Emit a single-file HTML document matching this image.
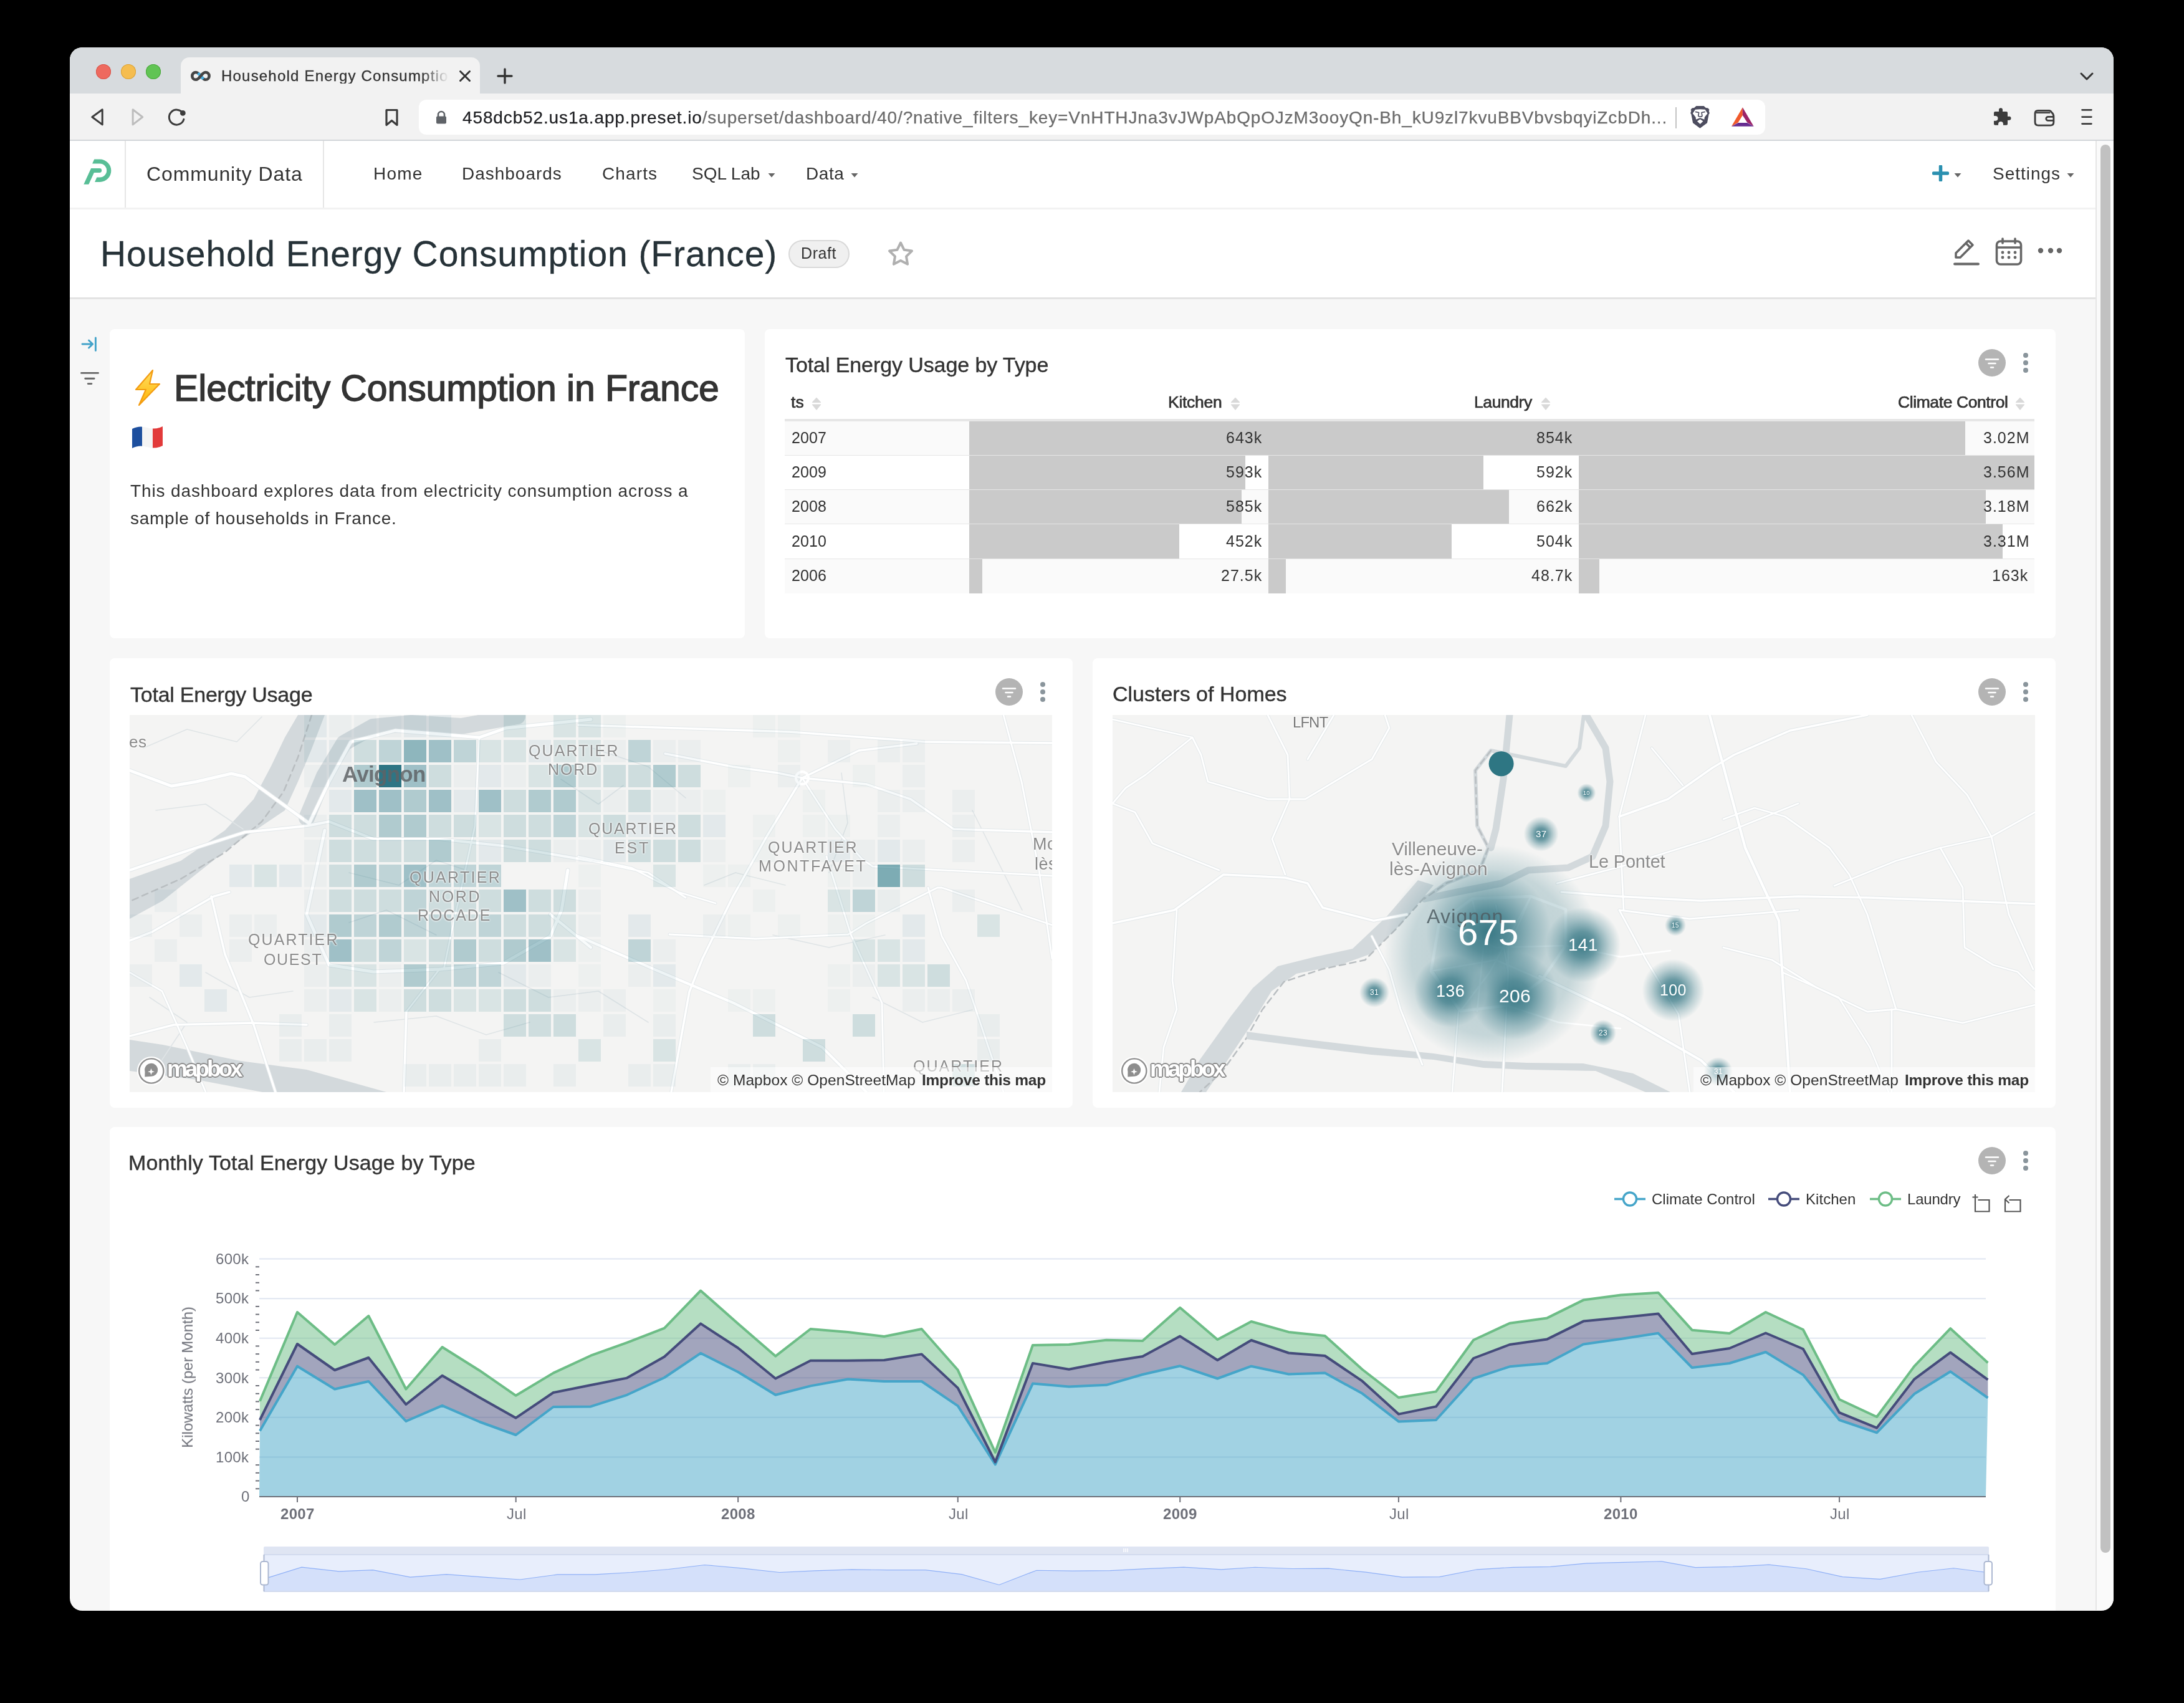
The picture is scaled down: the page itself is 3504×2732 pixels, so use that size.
<!DOCTYPE html>
<html><head><meta charset="utf-8">
<style>
*{box-sizing:border-box;margin:0;padding:0}
html,body{width:3504px;height:2732px;overflow:hidden;background:#000;font-family:"Liberation Sans",sans-serif}
.a{position:absolute;display:block}
.t{position:absolute;white-space:nowrap;will-change:transform}
#win{position:absolute;left:112px;top:76px;width:3279px;height:2508px;border-radius:20px;overflow:hidden;background:#f7f7f7}
</style></head><body><div id="win"><div class="a" style="left:0.00px;top:0.00px;width:3279.00px;height:74.00px;background:#d7dbde"></div><div class="a" style="left:178.00px;top:16.00px;width:480.00px;height:59.00px;background:#f2f2f2;border-radius:14px 14px 0 0"></div><div class="a" style="left:42.00px;top:27.00px;width:24.00px;height:24.00px;background:#ee6a5f;border-radius:50%;box-shadow:inset 0 0 0 1px #d8574c"></div><div class="a" style="left:82.00px;top:27.00px;width:24.00px;height:24.00px;background:#f5bd4f;border-radius:50%;box-shadow:inset 0 0 0 1px #d9a33c"></div><div class="a" style="left:122.00px;top:27.00px;width:24.00px;height:24.00px;background:#61c454;border-radius:50%;box-shadow:inset 0 0 0 1px #4ea840"></div><svg class="a" style="left:192.00px;top:35.00px;" width="36.00" height="22.00" viewBox="0 0 36 22"><path d="M18 10.9 C20.5 7.5 23 5 25.7 5 C29 5 31.6 7.6 31.6 10.9 C31.6 14.2 29 16.8 25.7 16.8 C23 16.8 20.5 14.3 18 10.9 C15.5 7.5 13 5 10.2 5 C6.9 5 4.3 7.6 4.3 10.9 C4.3 14.2 6.9 16.8 10.2 16.8 C13 16.8 15.5 14.3 18 10.9 Z" fill="none" stroke="#454545" stroke-width="4.6"/><path d="M13.6 6.3 L17.2 9.7 M18.8 12.1 L22.4 15.5" stroke="#45ade0" stroke-width="4.6"/><path d="M15.2 14 L20.8 7.8" stroke="#454545" stroke-width="4.4"/></svg><div class="t" style="left:242.70px;top:33.68px;font-size:24px;line-height:24px;font-weight:normal;color:#333;letter-spacing:1.200px;font-family:'Liberation Sans',sans-serif;-webkit-text-stroke:0.35px #333;width:365px;overflow:hidden;-webkit-mask-image:linear-gradient(90deg,#000 88%,transparent 100%)">Household Energy Consumption</div><svg class="a" style="left:624.00px;top:36.00px;" width="20.00" height="20.00" viewBox="0 0 20 20"><path d="M2.5 2.5 L17.5 17.5 M17.5 2.5 L2.5 17.5" stroke="#333" stroke-width="3" stroke-linecap="round"/></svg><svg class="a" style="left:684.00px;top:32.00px;" width="28.00" height="28.00" viewBox="0 0 28 28"><path d="M14 3 V25 M3 14 H25" stroke="#333" stroke-width="3.4" stroke-linecap="round"/></svg><svg class="a" style="left:3224.00px;top:36.00px;" width="24.00" height="22.00" viewBox="0 0 24 22"><path d="M3 6 L12 15 L21 6" fill="none" stroke="#333" stroke-width="3" stroke-linecap="round" stroke-linejoin="round"/></svg><div class="a" style="left:0.00px;top:74.00px;width:3279.00px;height:75.00px;background:#f2f2f2"></div><div class="a" style="left:0.00px;top:148.00px;width:3279.00px;height:2.00px;background:#d2d5d9"></div><svg class="a" style="left:31.00px;top:96.00px;" width="27.00" height="32.00" viewBox="0 0 27 32"><path d="M21.2 3.8 L4.8 15.8 L21.2 27.9 Z" fill="none" stroke="#3c3c3c" stroke-width="3" stroke-linejoin="round"/></svg><svg class="a" style="left:95.00px;top:96.00px;" width="27.00" height="32.00" viewBox="0 0 27 32"><path d="M6.1 3.8 L21.7 15.8 L6.1 27.9 Z" fill="none" stroke="#bdbdbd" stroke-width="3" stroke-linejoin="round"/></svg><svg class="a" style="left:154.00px;top:96.00px;" width="36.00" height="32.00" viewBox="0 0 36 32"><path d="M27.3 9.4 A12 12 0 1 0 28.9 19.4" fill="none" stroke="#3c3c3c" stroke-width="3" stroke-linecap="round"/><circle cx="27.3" cy="9.4" r="4.4" fill="#3c3c3c"/></svg><svg class="a" style="left:502.00px;top:97.00px;" width="29.00" height="31.00" viewBox="0 0 29 31"><path d="M6 3.5 H23 V27.5 L14.5 20.5 L6 27.5 Z" fill="none" stroke="#3c3c3c" stroke-width="3.2" stroke-linejoin="round"/></svg><div class="a" style="left:560.00px;top:84.00px;width:2160.00px;height:56.00px;background:#fff;border-radius:12px"></div><svg class="a" style="left:586.00px;top:100.00px;" width="20.00" height="24.00" viewBox="0 0 20 24"><path d="M5 11 V8 A5 5 0 0 1 15 8 V11" fill="none" stroke="#5f6368" stroke-width="2.6"/><rect x="2" y="10.5" width="16" height="12" rx="2" fill="#5f6368"/></svg><div class="t" style="left:629.50px;top:98.80px;font-size:28px;line-height:28px;font-weight:normal;color:#6b6b6b;letter-spacing:0.870px;font-family:'Liberation Sans',sans-serif;-webkit-text-stroke:0.25px"><span style="color:#202124">458dcb52.us1a.app.preset.io</span>/superset/dashboard/40/?native_filters_key=VnHTHJna3vJWpAbQpOJzM3ooyQn-Bh_kU9zl7kvuBBVbvsbqyiZcbDh...</div><div class="a" style="left:2576.00px;top:96.00px;width:2.00px;height:34.00px;background:#c4c4c4"></div><svg class="a" style="left:2588.00px;top:84.00px;" width="130.00" height="55.00" viewBox="0 0 2184 924"><path d="M360 170 H565 L620 220 L680 225 L715 275 L700 300 L720 365 L700 390 L655 625 L462 770 L270 625 L225 390 L205 365 L225 300 L210 275 L245 225 L305 220 Z" fill="#4d4d5f"/><path d="M265 370 L335 265 Q465 245 600 265 L665 370 L585 470 L575 545 L470 500 L355 545 L345 470 Z" fill="#fff"/><path d="M385 580 L465 525 L545 580 L465 655 Z" fill="#fff"/><path d="M335 325 L430 345 L415 440 Q465 475 520 440 L505 345 L600 325 M355 545 L465 505 L575 545" fill="none" stroke="#4d4d5f" stroke-width="28" stroke-linejoin="round"/><path d="M1610 205 L1310 720 L1490 615 L1610 420 Z" fill="#f15a2b"/><path d="M1610 205 L1910 720 L1735 615 L1610 420 Z" fill="#9b2469"/><path d="M1310 720 L1910 720 L1735 620 L1490 620 Z" fill="#662d91"/></svg><svg class="a" style="left:3073.00px;top:84.00px;" width="185.00" height="55.00" viewBox="0 0 2184 649"><rect x="165" y="225" width="260" height="255" rx="22" fill="#3c3c3c"/><rect x="260" y="185" width="70" height="60" fill="#3c3c3c"/><circle cx="295" cy="190" r="35" fill="#3c3c3c"/><rect x="410" y="317" width="45" height="70" fill="#3c3c3c"/><circle cx="455" cy="352" r="35" fill="#3c3c3c"/><circle cx="195" cy="352" r="46" fill="#f2f2f2"/><rect x="140" y="306" width="55" height="92" fill="#f2f2f2"/><circle cx="295" cy="458" r="46" fill="#f2f2f2"/><rect x="249" y="458" width="92" height="40" fill="#f2f2f2"/><path d="M1000 205 H1210 Q1240 205 1260 240 Q1297 270 1297 320 V425 Q1297 485 1237 485 H1005 Q945 485 945 425 V260 Q945 205 1000 205 Z" fill="none" stroke="#3c3c3c" stroke-width="34"/><path d="M962 245 H1232" stroke="#3c3c3c" stroke-width="28"/><path d="M1290 322 H1190 A36 36 0 0 0 1190 394 H1290" fill="none" stroke="#3c3c3c" stroke-width="32"/><path d="M1836 193 H2012 M1836 325 H2012 M1836 455 H2012" stroke="#3c3c3c" stroke-width="32" stroke-linecap="round"/></svg><div class="a" style="left:0.00px;top:150.00px;width:3279.00px;height:107.00px;background:#fff"></div><div class="a" style="left:0.00px;top:257.00px;width:3250.00px;height:3.00px;background:#f2f2f2"></div><div class="a" style="left:88.00px;top:150.00px;width:2.00px;height:107.00px;background:#e6e6e6"></div><div class="a" style="left:406.00px;top:150.00px;width:2.00px;height:107.00px;background:#e6e6e6"></div><svg class="a" style="left:13.00px;top:169.00px;" width="65.00" height="60.00" viewBox="0 0 65 60"><path d="M26.25 10.6 H35.2 A18.15 18.15 0 0 1 35.2 46.9 H27.1 L30.3 39.5 H35.2 A10.95 10.95 0 0 0 35.2 17.6 H23.1 Z" fill="#58be96"/><path d="M21.1 25 H34.7 A3.45 3.45 0 0 1 34.7 31.9 H25.9 L17.3 50.7 H9.3 Z" fill="#58be96"/></svg><div class="t" style="left:122.70px;top:186.91px;font-size:32px;line-height:32px;font-weight:normal;color:#333;letter-spacing:0.877px;font-family:'Liberation Sans',sans-serif;">Community Data</div><div class="t" style="left:487.30px;top:189.30px;font-size:28px;line-height:28px;font-weight:normal;color:#333;letter-spacing:1.194px;font-family:'Liberation Sans',sans-serif;">Home</div><div class="t" style="left:629.00px;top:189.30px;font-size:28px;line-height:28px;font-weight:normal;color:#333;letter-spacing:0.980px;font-family:'Liberation Sans',sans-serif;">Dashboards</div><div class="t" style="left:853.50px;top:189.30px;font-size:28px;line-height:28px;font-weight:normal;color:#333;letter-spacing:1.126px;font-family:'Liberation Sans',sans-serif;">Charts</div><div class="t" style="left:998.00px;top:189.30px;font-size:28px;line-height:28px;font-weight:normal;color:#333;letter-spacing:0.008px;font-family:'Liberation Sans',sans-serif;">SQL Lab</div><div class="t" style="left:1180.70px;top:189.30px;font-size:28px;line-height:28px;font-weight:normal;color:#333;letter-spacing:0.576px;font-family:'Liberation Sans',sans-serif;">Data</div><svg class="a" style="left:1119.50px;top:201.00px;" width="12.00" height="8.00" viewBox="0 0 12.0 8"><path d="M0.5 1 H11.5 L6 7.5Z" fill="#666"/></svg><svg class="a" style="left:1252.50px;top:201.00px;" width="12.00" height="8.00" viewBox="0 0 12.0 8"><path d="M0.5 1 H11.5 L6 7.5Z" fill="#666"/></svg><svg class="a" style="left:2988.00px;top:189.00px;" width="27.00" height="26.00" viewBox="0 0 27 26"><path d="M13.5 2 V24 M2.5 13 H24.5" stroke="#2a90b0" stroke-width="5.5" stroke-linecap="round"/></svg><svg class="a" style="left:3023.00px;top:201.00px;" width="12.00" height="8.00" viewBox="0 0 12 8"><path d="M0.5 1 H11.5 L6 7.5Z" fill="#666"/></svg><div class="t" style="left:3085.00px;top:189.30px;font-size:28px;line-height:28px;font-weight:normal;color:#333;letter-spacing:0.975px;font-family:'Liberation Sans',sans-serif;">Settings</div><svg class="a" style="left:3204.00px;top:201.00px;" width="12.00" height="8.00" viewBox="0 0 12 8"><path d="M0.5 1 H11.5 L6 7.5Z" fill="#666"/></svg><div class="a" style="left:0.00px;top:260.00px;width:3250.00px;height:142.00px;background:#fff"></div><div class="a" style="left:0.00px;top:401.00px;width:3250.00px;height:3.00px;background:#e3e3e3"></div><div class="t" style="left:48.70px;top:303.25px;font-size:57px;line-height:57px;font-weight:normal;color:#263238;letter-spacing:0.928px;font-family:'Liberation Sans',sans-serif;-webkit-text-stroke:0.3px #263238">Household Energy Consumption (France)</div><div class="a" style="left:1153.00px;top:309.00px;width:98.00px;height:45.00px;background:#f0f0f0;border:2px solid #d9d9d9;border-radius:23px"></div><div class="t" style="left:1173.40px;top:318.24px;font-size:25px;line-height:25px;font-weight:normal;color:#333;letter-spacing:0.593px;font-family:'Liberation Sans',sans-serif;">Draft</div><svg class="a" style="left:1310.00px;top:309.00px;" width="46.00" height="42.00" viewBox="0 0 46 42"><path d="M23 4.5 L28.6 15.8 L41 17.6 L32 26.4 L34.1 38.8 L23 33 L11.9 38.8 L14 26.4 L5 17.6 L17.4 15.8 Z" fill="none" stroke="#b0b0b0" stroke-width="4" stroke-linejoin="round"/></svg><svg class="a" style="left:3018.00px;top:304.00px;" width="48.00" height="48.00" viewBox="0 0 48 48"><path d="M8 33 V26 L28 6 L35 13 L15 33 Z" fill="none" stroke="#666" stroke-width="3.5" stroke-linejoin="round"/><path d="M24 10 L31 17" stroke="#666" stroke-width="3.5"/><path d="M6 43.5 H44" stroke="#666" stroke-width="3.8" stroke-linecap="round"/></svg><svg class="a" style="left:3088.00px;top:304.00px;" width="46.00" height="48.00" viewBox="0 0 46 48"><rect x="3.5" y="7" width="39" height="37" rx="6" fill="none" stroke="#666" stroke-width="3.6"/><path d="M3.5 17 H42.5" stroke="#666" stroke-width="3.6"/><path d="M13 3 V10 M33 3 V10" stroke="#666" stroke-width="3.6" stroke-linecap="round"/><circle cx="13" cy="25" r="2.4" fill="#666"/><circle cx="13" cy="33" r="2.4" fill="#666"/><circle cx="23" cy="25" r="2.4" fill="#666"/><circle cx="23" cy="33" r="2.4" fill="#666"/><circle cx="33" cy="25" r="2.4" fill="#666"/><circle cx="33" cy="33" r="2.4" fill="#666"/></svg><svg class="a" style="left:3154.00px;top:318.00px;" width="48.00" height="16.00" viewBox="0 0 48 16"><circle cx="8" cy="8" r="4.2" fill="#666"/><circle cx="24" cy="8" r="4.2" fill="#666"/><circle cx="38" cy="8" r="4.2" fill="#666"/></svg><div class="a" style="left:3250.00px;top:150.00px;width:29.00px;height:2357.00px;background:#fafafa;border-left:2px solid #e6e6e6"></div><div class="a" style="left:3258.00px;top:156.00px;width:16.00px;height:2259.00px;background:#c1c1c1;border-radius:8px"></div><svg class="a" style="left:16.00px;top:462.00px;" width="32.00" height="28.00" viewBox="0 0 32 28"><path d="M4 14 H20.5 M14.5 8 L20.7 14 L14.5 20 M25.4 4 V24.4" fill="none" stroke="#44a3c9" stroke-width="2.9" stroke-linecap="round" stroke-linejoin="round"/></svg><svg class="a" style="left:14.00px;top:518.00px;" width="36.00" height="26.00" viewBox="0 0 36 26"><path d="M4.5 4.4 H31.5 M10.7 13.2 H25.1 M15.2 21.6 H20.9" stroke="#666" stroke-width="2.9" stroke-linecap="round"/></svg><div class="a" style="left:64.00px;top:452.00px;width:1019.00px;height:496.00px;background:#fff;border-radius:8px"></div><div class="a" style="left:1115.00px;top:452.00px;width:2071.00px;height:496.00px;background:#fff;border-radius:8px"></div><div class="a" style="left:64.00px;top:980.00px;width:1545.00px;height:721.00px;background:#fff;border-radius:8px"></div><div class="a" style="left:1641.00px;top:980.00px;width:1545.00px;height:721.00px;background:#fff;border-radius:8px"></div><div class="a" style="left:64.00px;top:1732.00px;width:3122.00px;height:792.00px;background:#fff;border-radius:8px"></div><svg class="a" style="left:102.00px;top:516.00px;" width="46.00" height="60.00" viewBox="0 0 46 60"><defs><linearGradient id="lg" x1="0" y1="0" x2="0" y2="1"><stop offset="0" stop-color="#ffe066"/><stop offset="1" stop-color="#ffb300"/></linearGradient></defs><path d="M31 2 L4 33 H20 L9 58 L42 24 H26 Z" fill="url(#lg)" stroke="#f39c12" stroke-width="2.2" stroke-linejoin="round"/></svg><div class="t" style="left:166.90px;top:518.16px;font-size:59px;line-height:59px;font-weight:normal;color:#333;letter-spacing:-0.121px;font-family:'Liberation Sans',sans-serif;-webkit-text-stroke:1.4px #333">Electricity Consumption in France</div><svg class="a" style="left:97.00px;top:604.00px;" width="55.00" height="42.00" viewBox="0 0 55 42"><defs><clipPath id="fc"><path d="M3 8 Q14 2 27 6 Q40 10 52 4 V35 Q40 41 27 37 Q14 33 3 39 Z"/></clipPath></defs><g clip-path="url(#fc)"><rect x="0" y="0" width="19" height="42" fill="#1d4f9e"/><rect x="19" y="0" width="17" height="42" fill="#f4f4f4"/><rect x="36" y="0" width="19" height="42" fill="#e23a3a"/></g></svg><div class="t" style="left:97.00px;top:698.30px;font-size:28px;line-height:28px;font-weight:normal;color:#333;letter-spacing:0.881px;font-family:'Liberation Sans',sans-serif;">This dashboard explores data from electricity consumption across a</div><div class="t" style="left:97.00px;top:741.90px;font-size:28px;line-height:28px;font-weight:normal;color:#333;letter-spacing:0.737px;font-family:'Liberation Sans',sans-serif;">sample of households in France.</div><div class="t" style="left:1148.00px;top:492.22px;font-size:34px;line-height:34px;font-weight:normal;color:#333;letter-spacing:-0.093px;font-family:'Liberation Sans',sans-serif;-webkit-text-stroke:0.4px #333">Total Energy Usage by Type</div><div class="a" style="left:3062.00px;top:483.50px;width:44.00px;height:44.00px;background:#b4b4b4;border-radius:50%"></div><svg class="a" style="left:3070.00px;top:495.50px;" width="28.00" height="22.00" viewBox="0 0 28 22.0"><path d="M4 4.5 H24 M8.5 11 H19.5 M12 17.5 H16" stroke="#fff" stroke-width="2.6" stroke-linecap="round"/></svg><svg class="a" style="left:3132.50px;top:485.50px;" width="10.00" height="40.00" viewBox="0 0 10.0 40.0"><circle cx="5" cy="8" r="4" fill="#8a959c"/><circle cx="5" cy="20" r="4" fill="#8a959c"/><circle cx="5" cy="32" r="4" fill="#8a959c"/></svg><div class="t" style="left:1157.00px;top:556.07px;font-size:26.5px;line-height:26.5px;font-weight:normal;color:#333;letter-spacing:0.137px;font-family:'Liberation Sans',sans-serif;-webkit-text-stroke:0.7px #333">ts</div><svg class="a" style="left:1190.00px;top:560.00px;" width="16.00" height="24.00" viewBox="0 0 16 24"><path d="M8 2.5 L14.5 9.5 H1.5Z M8 21 L14.5 13 H1.5Z" fill="#d9d9d9" stroke="#d9d9d9" stroke-width="1.2" stroke-linejoin="round"/></svg><div class="t" style="left:1762.00px;top:556.07px;font-size:26.5px;line-height:26.5px;font-weight:normal;color:#333;letter-spacing:-0.275px;font-family:'Liberation Sans',sans-serif;-webkit-text-stroke:0.7px #333">Kitchen</div><svg class="a" style="left:1862.00px;top:560.00px;" width="16.00" height="24.00" viewBox="0 0 16 24"><path d="M8 2.5 L14.5 9.5 H1.5Z M8 21 L14.5 13 H1.5Z" fill="#d9d9d9" stroke="#d9d9d9" stroke-width="1.2" stroke-linejoin="round"/></svg><div class="t" style="left:2253.00px;top:556.07px;font-size:26.5px;line-height:26.5px;font-weight:normal;color:#333;letter-spacing:-0.419px;font-family:'Liberation Sans',sans-serif;-webkit-text-stroke:0.7px #333">Laundry</div><svg class="a" style="left:2360.00px;top:560.00px;" width="16.00" height="24.00" viewBox="0 0 16 24"><path d="M8 2.5 L14.5 9.5 H1.5Z M8 21 L14.5 13 H1.5Z" fill="#d9d9d9" stroke="#d9d9d9" stroke-width="1.2" stroke-linejoin="round"/></svg><div class="t" style="left:2933.00px;top:556.07px;font-size:26.5px;line-height:26.5px;font-weight:normal;color:#333;letter-spacing:-0.409px;font-family:'Liberation Sans',sans-serif;-webkit-text-stroke:0.7px #333">Climate Control</div><svg class="a" style="left:3121.00px;top:560.00px;" width="16.00" height="24.00" viewBox="0 0 16 24"><path d="M8 2.5 L14.5 9.5 H1.5Z M8 21 L14.5 13 H1.5Z" fill="#d9d9d9" stroke="#d9d9d9" stroke-width="1.2" stroke-linejoin="round"/></svg><div class="a" style="left:1147.00px;top:596.00px;width:2005.00px;height:4.00px;background:#e6e6e6"></div><div class="a" style="left:1147.00px;top:600.00px;width:2005.00px;height:54.50px;background:#fafafa"></div><div class="a" style="left:1443.00px;top:600.00px;width:480.00px;height:54.50px;background:#cacaca"></div><div class="a" style="left:1923.00px;top:600.00px;width:498.00px;height:54.50px;background:#cacaca"></div><div class="a" style="left:2421.00px;top:600.00px;width:620.12px;height:54.50px;background:#cacaca"></div><div class="a" style="left:1147.00px;top:653.50px;width:2005.00px;height:2.00px;background:#e6e6e6"></div><div class="t" style="left:1157.90px;top:613.84px;font-size:25px;line-height:25px;font-weight:normal;color:#333;letter-spacing:0.100px;font-family:'Liberation Sans',sans-serif;">2007</div><div class="t" style="left:1855.29px;top:613.84px;font-size:25px;line-height:25px;font-weight:normal;color:#333;letter-spacing:1.000px;font-family:'Liberation Sans',sans-serif;">643k</div><div class="t" style="left:2353.29px;top:613.84px;font-size:25px;line-height:25px;font-weight:normal;color:#333;letter-spacing:1.000px;font-family:'Liberation Sans',sans-serif;">854k</div><div class="t" style="left:3070.34px;top:613.84px;font-size:25px;line-height:25px;font-weight:normal;color:#333;letter-spacing:1.000px;font-family:'Liberation Sans',sans-serif;">3.02M</div><div class="a" style="left:1147.00px;top:654.50px;width:2005.00px;height:55.50px;background:#fff"></div><div class="a" style="left:1443.00px;top:654.50px;width:442.67px;height:55.50px;background:#cacaca"></div><div class="a" style="left:1923.00px;top:654.50px;width:345.22px;height:55.50px;background:#cacaca"></div><div class="a" style="left:2421.00px;top:654.50px;width:731.00px;height:55.50px;background:#cacaca"></div><div class="a" style="left:1147.00px;top:709.00px;width:2005.00px;height:2.00px;background:#e6e6e6"></div><div class="t" style="left:1157.90px;top:669.14px;font-size:25px;line-height:25px;font-weight:normal;color:#333;letter-spacing:0.100px;font-family:'Liberation Sans',sans-serif;">2009</div><div class="t" style="left:1855.29px;top:669.14px;font-size:25px;line-height:25px;font-weight:normal;color:#333;letter-spacing:1.000px;font-family:'Liberation Sans',sans-serif;">593k</div><div class="t" style="left:2353.29px;top:669.14px;font-size:25px;line-height:25px;font-weight:normal;color:#333;letter-spacing:1.000px;font-family:'Liberation Sans',sans-serif;">592k</div><div class="t" style="left:3070.34px;top:669.14px;font-size:25px;line-height:25px;font-weight:normal;color:#333;letter-spacing:1.000px;font-family:'Liberation Sans',sans-serif;">3.56M</div><div class="a" style="left:1147.00px;top:710.00px;width:2005.00px;height:55.00px;background:#fafafa"></div><div class="a" style="left:1443.00px;top:710.00px;width:436.70px;height:55.00px;background:#cacaca"></div><div class="a" style="left:1923.00px;top:710.00px;width:386.04px;height:55.00px;background:#cacaca"></div><div class="a" style="left:2421.00px;top:710.00px;width:652.97px;height:55.00px;background:#cacaca"></div><div class="a" style="left:1147.00px;top:764.00px;width:2005.00px;height:2.00px;background:#e6e6e6"></div><div class="t" style="left:1157.90px;top:724.44px;font-size:25px;line-height:25px;font-weight:normal;color:#333;letter-spacing:0.100px;font-family:'Liberation Sans',sans-serif;">2008</div><div class="t" style="left:1855.29px;top:724.44px;font-size:25px;line-height:25px;font-weight:normal;color:#333;letter-spacing:1.000px;font-family:'Liberation Sans',sans-serif;">585k</div><div class="t" style="left:2353.29px;top:724.44px;font-size:25px;line-height:25px;font-weight:normal;color:#333;letter-spacing:1.000px;font-family:'Liberation Sans',sans-serif;">662k</div><div class="t" style="left:3070.34px;top:724.44px;font-size:25px;line-height:25px;font-weight:normal;color:#333;letter-spacing:1.000px;font-family:'Liberation Sans',sans-serif;">3.18M</div><div class="a" style="left:1147.00px;top:765.00px;width:2005.00px;height:56.00px;background:#fff"></div><div class="a" style="left:1443.00px;top:765.00px;width:337.42px;height:56.00px;background:#cacaca"></div><div class="a" style="left:1923.00px;top:765.00px;width:293.90px;height:56.00px;background:#cacaca"></div><div class="a" style="left:2421.00px;top:765.00px;width:679.67px;height:56.00px;background:#cacaca"></div><div class="a" style="left:1147.00px;top:820.00px;width:2005.00px;height:2.00px;background:#e6e6e6"></div><div class="t" style="left:1157.90px;top:779.74px;font-size:25px;line-height:25px;font-weight:normal;color:#333;letter-spacing:0.100px;font-family:'Liberation Sans',sans-serif;">2010</div><div class="t" style="left:1855.29px;top:779.74px;font-size:25px;line-height:25px;font-weight:normal;color:#333;letter-spacing:1.000px;font-family:'Liberation Sans',sans-serif;">452k</div><div class="t" style="left:2353.29px;top:779.74px;font-size:25px;line-height:25px;font-weight:normal;color:#333;letter-spacing:1.000px;font-family:'Liberation Sans',sans-serif;">504k</div><div class="t" style="left:3070.34px;top:779.74px;font-size:25px;line-height:25px;font-weight:normal;color:#333;letter-spacing:1.000px;font-family:'Liberation Sans',sans-serif;">3.31M</div><div class="a" style="left:1147.00px;top:821.00px;width:2005.00px;height:55.00px;background:#fafafa"></div><div class="a" style="left:1443.00px;top:821.00px;width:20.53px;height:55.00px;background:#cacaca"></div><div class="a" style="left:1923.00px;top:821.00px;width:28.40px;height:55.00px;background:#cacaca"></div><div class="a" style="left:2421.00px;top:821.00px;width:33.47px;height:55.00px;background:#cacaca"></div><div class="t" style="left:1157.90px;top:835.04px;font-size:25px;line-height:25px;font-weight:normal;color:#333;letter-spacing:0.100px;font-family:'Liberation Sans',sans-serif;">2006</div><div class="t" style="left:1847.34px;top:835.04px;font-size:25px;line-height:25px;font-weight:normal;color:#333;letter-spacing:1.000px;font-family:'Liberation Sans',sans-serif;">27.5k</div><div class="t" style="left:2345.34px;top:835.04px;font-size:25px;line-height:25px;font-weight:normal;color:#333;letter-spacing:1.000px;font-family:'Liberation Sans',sans-serif;">48.7k</div><div class="t" style="left:3084.29px;top:835.04px;font-size:25px;line-height:25px;font-weight:normal;color:#333;letter-spacing:1.000px;font-family:'Liberation Sans',sans-serif;">163k</div><div class="t" style="left:97.00px;top:1020.92px;font-size:34px;line-height:34px;font-weight:normal;color:#333;letter-spacing:-0.242px;font-family:'Liberation Sans',sans-serif;-webkit-text-stroke:0.4px #333">Total Energy Usage</div><div class="a" style="left:1485.00px;top:1012.00px;width:44.00px;height:44.00px;background:#b4b4b4;border-radius:50%"></div><svg class="a" style="left:1493.00px;top:1024.00px;" width="28.00" height="22.00" viewBox="0 0 28 22"><path d="M4 4.5 H24 M8.5 11 H19.5 M12 17.5 H16" stroke="#fff" stroke-width="2.6" stroke-linecap="round"/></svg><svg class="a" style="left:1556.00px;top:1014.00px;" width="10.00" height="40.00" viewBox="0 0 10 40"><circle cx="5" cy="8" r="4" fill="#8a959c"/><circle cx="5" cy="20" r="4" fill="#8a959c"/><circle cx="5" cy="32" r="4" fill="#8a959c"/></svg><div class="t" style="left:1673.00px;top:1019.72px;font-size:34px;line-height:34px;font-weight:normal;color:#333;letter-spacing:-0.002px;font-family:'Liberation Sans',sans-serif;-webkit-text-stroke:0.4px #333">Clusters of Homes</div><div class="a" style="left:3062.00px;top:1012.00px;width:44.00px;height:44.00px;background:#b4b4b4;border-radius:50%"></div><svg class="a" style="left:3070.00px;top:1024.00px;" width="28.00" height="22.00" viewBox="0 0 28 22"><path d="M4 4.5 H24 M8.5 11 H19.5 M12 17.5 H16" stroke="#fff" stroke-width="2.6" stroke-linecap="round"/></svg><svg class="a" style="left:3133.00px;top:1014.00px;" width="10.00" height="40.00" viewBox="0 0 10 40"><circle cx="5" cy="8" r="4" fill="#8a959c"/><circle cx="5" cy="20" r="4" fill="#8a959c"/><circle cx="5" cy="32" r="4" fill="#8a959c"/></svg><svg class="a" style="left:96px;top:1071px;" width="1480" height="605" viewBox="208 1147 1480 605"><defs><clipPath id="m1"><rect x="208" y="1147" width="1480" height="605"/></clipPath></defs><g clip-path="url(#m1)"><rect x="208" y="1147" width="1480" height="605" fill="#f4f4f3"/><polygon points="478,1147 457,1183 435,1229 407,1282 361,1332 290,1381 208,1410 208,1474 261,1445 368,1360 457,1300 478,1254 499,1204 521,1147" fill="#d3d9dc"/><polyline points="492,1312 520,1245 552,1192 598,1166 660,1160 740,1165 830,1149" fill="none" stroke="#d3d9dc" stroke-width="26" stroke-linejoin="round" stroke-linecap="round" /><polyline points="500,1147 478,1215 455,1270 420,1318 360,1368 290,1410 208,1446" fill="none" stroke="#b9bec1" stroke-width="2.5" stroke-linejoin="round" stroke-linecap="round" stroke-dasharray="10 7"/><polygon points="208,1668 261,1676 386,1702 492,1716 620,1752 421,1752 315,1732 208,1718" fill="#d3d9dc"/><polyline points="230,1200 300,1170 380,1190 420,1150" fill="none" stroke="#dfe4e6" stroke-width="1.6" stroke-linejoin="round" stroke-linecap="round" /><polyline points="250,1300 330,1290 390,1330" fill="none" stroke="#dfe4e6" stroke-width="1.6" stroke-linejoin="round" stroke-linecap="round" /><polyline points="560,1400 640,1420 700,1380 760,1400" fill="none" stroke="#dfe4e6" stroke-width="1.6" stroke-linejoin="round" stroke-linecap="round" /><polyline points="560,1480 620,1460 700,1500" fill="none" stroke="#dfe4e6" stroke-width="1.6" stroke-linejoin="round" stroke-linecap="round" /><polyline points="330,1560 400,1600 470,1590" fill="none" stroke="#dfe4e6" stroke-width="1.6" stroke-linejoin="round" stroke-linecap="round" /><polyline points="600,1640 700,1630 780,1660 850,1640" fill="none" stroke="#dfe4e6" stroke-width="1.6" stroke-linejoin="round" stroke-linecap="round" /><polyline points="950,1200 1040,1230 1100,1280" fill="none" stroke="#dfe4e6" stroke-width="1.6" stroke-linejoin="round" stroke-linecap="round" /><polyline points="1130,1420 1180,1400 1260,1420" fill="none" stroke="#dfe4e6" stroke-width="1.6" stroke-linejoin="round" stroke-linecap="round" /><polyline points="1240,1500 1330,1520 1420,1500" fill="none" stroke="#dfe4e6" stroke-width="1.6" stroke-linejoin="round" stroke-linecap="round" /><polyline points="1350,1240 1360,1320 1330,1400" fill="none" stroke="#dfe4e6" stroke-width="1.6" stroke-linejoin="round" stroke-linecap="round" /><polyline points="1560,1300 1600,1380 1640,1460" fill="none" stroke="#dfe4e6" stroke-width="1.6" stroke-linejoin="round" stroke-linecap="round" /><polyline points="1400,1600 1480,1640 1560,1620" fill="none" stroke="#dfe4e6" stroke-width="1.6" stroke-linejoin="round" stroke-linecap="round" /><polyline points="800,1560 880,1600 960,1590 1040,1640" fill="none" stroke="#dfe4e6" stroke-width="1.6" stroke-linejoin="round" stroke-linecap="round" /><polyline points="240,1600 300,1640 260,1700" fill="none" stroke="#dfe4e6" stroke-width="1.6" stroke-linejoin="round" stroke-linecap="round" /><polyline points="900,1250 960,1290 1000,1260" fill="none" stroke="#dfe4e6" stroke-width="1.6" stroke-linejoin="round" stroke-linecap="round" /><polyline points="208,1236 275,1261 315,1254 371,1241 393,1246 496,1321" fill="none" stroke="#e3e8ea" stroke-width="6.8999999999999995" stroke-linejoin="round" stroke-linecap="round" /><polyline points="208,1396 315,1360 393,1335 492,1325 528,1318 599,1346 705,1346 808,1357 948,1381" fill="none" stroke="#e3e8ea" stroke-width="6.199999999999999" stroke-linejoin="round" stroke-linecap="round" /><polyline points="208,1509 244,1495 343,1438 368,1431" fill="none" stroke="#e3e8ea" stroke-width="5.5" stroke-linejoin="round" stroke-linecap="round" /><polyline points="496,1321 528,1254 563,1190 634,1172 769,1183 812,1168 948,1154" fill="none" stroke="#e3e8ea" stroke-width="6.8999999999999995" stroke-linejoin="round" stroke-linecap="round" /><polyline points="521,1332 492,1467 528,1548 599,1559 705,1555 808,1545 883,1502 901,1460 911,1396" fill="none" stroke="#e3e8ea" stroke-width="6.8999999999999995" stroke-linejoin="round" stroke-linecap="round" /><polyline points="339,1438 361,1531 407,1644 442,1752" fill="none" stroke="#e3e8ea" stroke-width="5.5" stroke-linejoin="round" stroke-linecap="round" /><polyline points="208,1662 279,1644 403,1641 492,1644" fill="none" stroke="#e3e8ea" stroke-width="5.5" stroke-linejoin="round" stroke-linecap="round" /><polyline points="652,1623 648,1752" fill="none" stroke="#e3e8ea" stroke-width="5.5" stroke-linejoin="round" stroke-linecap="round" /><polyline points="705,1555 652,1623" fill="none" stroke="#e3e8ea" stroke-width="4.8" stroke-linejoin="round" stroke-linecap="round" /><polyline points="769,1183 762,1325 723,1502 712,1555" fill="none" stroke="#e3e8ea" stroke-width="4.8" stroke-linejoin="round" stroke-linecap="round" /><polyline points="883,1467 948,1520" fill="none" stroke="#e3e8ea" stroke-width="6.199999999999999" stroke-linejoin="round" stroke-linecap="round" /><polyline points="928,1163 1266,1174 1483,1190 1688,1192" fill="none" stroke="#e3e8ea" stroke-width="5.5" stroke-linejoin="round" stroke-linecap="round" /><polyline points="1067,1209 1176,1230 1248,1240 1287,1248" fill="none" stroke="#e3e8ea" stroke-width="5.5" stroke-linejoin="round" stroke-linecap="round" /><polyline points="1287,1248 1378,1204 1471,1193" fill="none" stroke="#e3e8ea" stroke-width="5.5" stroke-linejoin="round" stroke-linecap="round" /><polyline points="1287,1248 1390,1258 1461,1282 1530,1330 1688,1335" fill="none" stroke="#e3e8ea" stroke-width="5.5" stroke-linejoin="round" stroke-linecap="round" /><polyline points="1287,1248 1230,1342 1176,1438 1127,1538 1106,1591 1077,1752" fill="none" stroke="#e3e8ea" stroke-width="5.5" stroke-linejoin="round" stroke-linecap="round" /><polyline points="1287,1248 1340,1330 1383,1378 1400,1390 1688,1405" fill="none" stroke="#e3e8ea" stroke-width="4.8" stroke-linejoin="round" stroke-linecap="round" /><polyline points="928,1374 1013,1392 1088,1431 1148,1449" fill="none" stroke="#e3e8ea" stroke-width="4.8" stroke-linejoin="round" stroke-linecap="round" /><polyline points="928,1502 1052,1556 1177,1609 1319,1680 1372,1733 1390,1752" fill="none" stroke="#e3e8ea" stroke-width="6.199999999999999" stroke-linejoin="round" stroke-linecap="round" /><polyline points="1074,1499 1212,1506 1361,1499 1390,1481 1504,1424 1511,1424 1688,1484" fill="none" stroke="#e3e8ea" stroke-width="4.8" stroke-linejoin="round" stroke-linecap="round" /><polyline points="1326,1374 1365,1499 1415,1609 1418,1752" fill="none" stroke="#e3e8ea" stroke-width="4.8" stroke-linejoin="round" stroke-linecap="round" /><polyline points="1489,1424 1511,1502 1550,1573 1610,1752" fill="none" stroke="#e3e8ea" stroke-width="4.8" stroke-linejoin="round" stroke-linecap="round" /><polyline points="1610,1147 1639,1254 1667,1396 1688,1538" fill="none" stroke="#e3e8ea" stroke-width="4.8" stroke-linejoin="round" stroke-linecap="round" /><polyline points="948,1381 1040,1400 1100,1440" fill="none" stroke="#e3e8ea" stroke-width="4.8" stroke-linejoin="round" stroke-linecap="round" /><polyline points="208,1560 260,1590 300,1680 330,1752" fill="none" stroke="#e3e8ea" stroke-width="4.8" stroke-linejoin="round" stroke-linecap="round" /><polyline points="208,1236 275,1261 315,1254 371,1241 393,1246 496,1321" fill="none" stroke="#fff" stroke-width="4.8999999999999995" stroke-linejoin="round" stroke-linecap="round" /><polyline points="208,1396 315,1360 393,1335 492,1325 528,1318 599,1346 705,1346 808,1357 948,1381" fill="none" stroke="#fff" stroke-width="4.199999999999999" stroke-linejoin="round" stroke-linecap="round" /><polyline points="208,1509 244,1495 343,1438 368,1431" fill="none" stroke="#fff" stroke-width="3.5" stroke-linejoin="round" stroke-linecap="round" /><polyline points="496,1321 528,1254 563,1190 634,1172 769,1183 812,1168 948,1154" fill="none" stroke="#fff" stroke-width="4.8999999999999995" stroke-linejoin="round" stroke-linecap="round" /><polyline points="521,1332 492,1467 528,1548 599,1559 705,1555 808,1545 883,1502 901,1460 911,1396" fill="none" stroke="#fff" stroke-width="4.8999999999999995" stroke-linejoin="round" stroke-linecap="round" /><polyline points="339,1438 361,1531 407,1644 442,1752" fill="none" stroke="#fff" stroke-width="3.5" stroke-linejoin="round" stroke-linecap="round" /><polyline points="208,1662 279,1644 403,1641 492,1644" fill="none" stroke="#fff" stroke-width="3.5" stroke-linejoin="round" stroke-linecap="round" /><polyline points="652,1623 648,1752" fill="none" stroke="#fff" stroke-width="3.5" stroke-linejoin="round" stroke-linecap="round" /><polyline points="705,1555 652,1623" fill="none" stroke="#fff" stroke-width="2.8" stroke-linejoin="round" stroke-linecap="round" /><polyline points="769,1183 762,1325 723,1502 712,1555" fill="none" stroke="#fff" stroke-width="2.8" stroke-linejoin="round" stroke-linecap="round" /><polyline points="883,1467 948,1520" fill="none" stroke="#fff" stroke-width="4.199999999999999" stroke-linejoin="round" stroke-linecap="round" /><polyline points="928,1163 1266,1174 1483,1190 1688,1192" fill="none" stroke="#fff" stroke-width="3.5" stroke-linejoin="round" stroke-linecap="round" /><polyline points="1067,1209 1176,1230 1248,1240 1287,1248" fill="none" stroke="#fff" stroke-width="3.5" stroke-linejoin="round" stroke-linecap="round" /><polyline points="1287,1248 1378,1204 1471,1193" fill="none" stroke="#fff" stroke-width="3.5" stroke-linejoin="round" stroke-linecap="round" /><polyline points="1287,1248 1390,1258 1461,1282 1530,1330 1688,1335" fill="none" stroke="#fff" stroke-width="3.5" stroke-linejoin="round" stroke-linecap="round" /><polyline points="1287,1248 1230,1342 1176,1438 1127,1538 1106,1591 1077,1752" fill="none" stroke="#fff" stroke-width="3.5" stroke-linejoin="round" stroke-linecap="round" /><polyline points="1287,1248 1340,1330 1383,1378 1400,1390 1688,1405" fill="none" stroke="#fff" stroke-width="2.8" stroke-linejoin="round" stroke-linecap="round" /><polyline points="928,1374 1013,1392 1088,1431 1148,1449" fill="none" stroke="#fff" stroke-width="2.8" stroke-linejoin="round" stroke-linecap="round" /><polyline points="928,1502 1052,1556 1177,1609 1319,1680 1372,1733 1390,1752" fill="none" stroke="#fff" stroke-width="4.199999999999999" stroke-linejoin="round" stroke-linecap="round" /><polyline points="1074,1499 1212,1506 1361,1499 1390,1481 1504,1424 1511,1424 1688,1484" fill="none" stroke="#fff" stroke-width="2.8" stroke-linejoin="round" stroke-linecap="round" /><polyline points="1326,1374 1365,1499 1415,1609 1418,1752" fill="none" stroke="#fff" stroke-width="2.8" stroke-linejoin="round" stroke-linecap="round" /><polyline points="1489,1424 1511,1502 1550,1573 1610,1752" fill="none" stroke="#fff" stroke-width="2.8" stroke-linejoin="round" stroke-linecap="round" /><polyline points="1610,1147 1639,1254 1667,1396 1688,1538" fill="none" stroke="#fff" stroke-width="2.8" stroke-linejoin="round" stroke-linecap="round" /><polyline points="948,1381 1040,1400 1100,1440" fill="none" stroke="#fff" stroke-width="2.8" stroke-linejoin="round" stroke-linecap="round" /><polyline points="208,1560 260,1590 300,1680 330,1752" fill="none" stroke="#fff" stroke-width="2.8" stroke-linejoin="round" stroke-linecap="round" /><circle cx="1287" cy="1248" r="10" fill="none" stroke="#fff" stroke-width="4"/><rect x="488" y="1147" width="36" height="36" fill="rgba(40,120,135,0.08)"/><rect x="528" y="1147" width="36" height="36" fill="rgba(40,120,135,0.045)"/><rect x="568" y="1147" width="36" height="36" fill="rgba(40,120,135,0.045)"/><rect x="608" y="1147" width="36" height="36" fill="rgba(40,120,135,0.045)"/><rect x="648" y="1147" width="36" height="36" fill="rgba(40,120,135,0.08)"/><rect x="688" y="1147" width="36" height="36" fill="rgba(40,120,135,0.08)"/><rect x="808" y="1147" width="36" height="36" fill="rgba(40,120,135,0.13)"/><rect x="888" y="1147" width="36" height="36" fill="rgba(40,120,135,0.13)"/><rect x="928" y="1147" width="36" height="36" fill="rgba(40,120,135,0.13)"/><rect x="968" y="1147" width="36" height="36" fill="rgba(40,120,135,0.03)"/><rect x="1208" y="1147" width="36" height="36" fill="rgba(40,120,135,0.03)"/><rect x="1248" y="1147" width="36" height="36" fill="rgba(40,120,135,0.03)"/><rect x="488" y="1187" width="36" height="36" fill="rgba(40,120,135,0.08)"/><rect x="528" y="1187" width="36" height="36" fill="rgba(40,120,135,0.08)"/><rect x="568" y="1187" width="36" height="36" fill="rgba(40,120,135,0.19)"/><rect x="608" y="1187" width="36" height="36" fill="rgba(40,120,135,0.26)"/><rect x="648" y="1187" width="36" height="36" fill="rgba(40,120,135,0.5)"/><rect x="688" y="1187" width="36" height="36" fill="rgba(40,120,135,0.41)"/><rect x="728" y="1187" width="36" height="36" fill="rgba(40,120,135,0.26)"/><rect x="768" y="1187" width="36" height="36" fill="rgba(40,120,135,0.13)"/><rect x="808" y="1187" width="36" height="36" fill="rgba(40,120,135,0.13)"/><rect x="848" y="1187" width="36" height="36" fill="rgba(40,120,135,0.08)"/><rect x="888" y="1187" width="36" height="36" fill="rgba(40,120,135,0.13)"/><rect x="928" y="1187" width="36" height="36" fill="rgba(40,120,135,0.13)"/><rect x="968" y="1187" width="36" height="36" fill="rgba(40,120,135,0.045)"/><rect x="1008" y="1187" width="36" height="36" fill="rgba(40,120,135,0.26)"/><rect x="1048" y="1187" width="36" height="36" fill="rgba(40,120,135,0.045)"/><rect x="1088" y="1187" width="36" height="36" fill="rgba(40,120,135,0.045)"/><rect x="1248" y="1187" width="36" height="36" fill="rgba(40,120,135,0.03)"/><rect x="1328" y="1187" width="36" height="36" fill="rgba(40,120,135,0.045)"/><rect x="1408" y="1187" width="36" height="36" fill="rgba(40,120,135,0.045)"/><rect x="1448" y="1187" width="36" height="36" fill="rgba(40,120,135,0.045)"/><rect x="488" y="1227" width="36" height="36" fill="rgba(40,120,135,0.045)"/><rect x="528" y="1227" width="36" height="36" fill="rgba(40,120,135,0.08)"/><rect x="568" y="1227" width="36" height="36" fill="rgba(40,120,135,0.33)"/><rect x="608" y="1227" width="36" height="36" fill="#2e7584"/><rect x="648" y="1227" width="36" height="36" fill="rgba(40,120,135,0.41)"/><rect x="688" y="1227" width="36" height="36" fill="rgba(40,120,135,0.19)"/><rect x="728" y="1227" width="36" height="36" fill="rgba(40,120,135,0.045)"/><rect x="768" y="1227" width="36" height="36" fill="rgba(40,120,135,0.08)"/><rect x="808" y="1227" width="36" height="36" fill="rgba(40,120,135,0.045)"/><rect x="848" y="1227" width="36" height="36" fill="rgba(40,120,135,0.13)"/><rect x="888" y="1227" width="36" height="36" fill="rgba(40,120,135,0.33)"/><rect x="928" y="1227" width="36" height="36" fill="rgba(40,120,135,0.13)"/><rect x="968" y="1227" width="36" height="36" fill="rgba(40,120,135,0.19)"/><rect x="1008" y="1227" width="36" height="36" fill="rgba(40,120,135,0.19)"/><rect x="1048" y="1227" width="36" height="36" fill="rgba(40,120,135,0.33)"/><rect x="1088" y="1227" width="36" height="36" fill="rgba(40,120,135,0.19)"/><rect x="1168" y="1227" width="36" height="36" fill="rgba(40,120,135,0.03)"/><rect x="1248" y="1227" width="36" height="36" fill="rgba(40,120,135,0.045)"/><rect x="1368" y="1227" width="36" height="36" fill="rgba(40,120,135,0.03)"/><rect x="1448" y="1227" width="36" height="36" fill="rgba(40,120,135,0.045)"/><rect x="528" y="1267" width="36" height="36" fill="rgba(40,120,135,0.08)"/><rect x="568" y="1267" width="36" height="36" fill="rgba(40,120,135,0.41)"/><rect x="608" y="1267" width="36" height="36" fill="rgba(40,120,135,0.41)"/><rect x="648" y="1267" width="36" height="36" fill="rgba(40,120,135,0.33)"/><rect x="688" y="1267" width="36" height="36" fill="rgba(40,120,135,0.41)"/><rect x="728" y="1267" width="36" height="36" fill="rgba(40,120,135,0.08)"/><rect x="768" y="1267" width="36" height="36" fill="rgba(40,120,135,0.41)"/><rect x="808" y="1267" width="36" height="36" fill="rgba(40,120,135,0.19)"/><rect x="848" y="1267" width="36" height="36" fill="rgba(40,120,135,0.33)"/><rect x="888" y="1267" width="36" height="36" fill="rgba(40,120,135,0.33)"/><rect x="928" y="1267" width="36" height="36" fill="rgba(40,120,135,0.13)"/><rect x="968" y="1267" width="36" height="36" fill="rgba(40,120,135,0.045)"/><rect x="1008" y="1267" width="36" height="36" fill="rgba(40,120,135,0.19)"/><rect x="1048" y="1267" width="36" height="36" fill="rgba(40,120,135,0.045)"/><rect x="1088" y="1267" width="36" height="36" fill="rgba(40,120,135,0.045)"/><rect x="1128" y="1267" width="36" height="36" fill="rgba(40,120,135,0.03)"/><rect x="1288" y="1267" width="36" height="36" fill="rgba(40,120,135,0.03)"/><rect x="1408" y="1267" width="36" height="36" fill="rgba(40,120,135,0.045)"/><rect x="1448" y="1267" width="36" height="36" fill="rgba(40,120,135,0.045)"/><rect x="1528" y="1267" width="36" height="36" fill="rgba(40,120,135,0.045)"/><rect x="488" y="1307" width="36" height="36" fill="rgba(40,120,135,0.045)"/><rect x="528" y="1307" width="36" height="36" fill="rgba(40,120,135,0.19)"/><rect x="568" y="1307" width="36" height="36" fill="rgba(40,120,135,0.19)"/><rect x="608" y="1307" width="36" height="36" fill="rgba(40,120,135,0.33)"/><rect x="648" y="1307" width="36" height="36" fill="rgba(40,120,135,0.33)"/><rect x="688" y="1307" width="36" height="36" fill="rgba(40,120,135,0.19)"/><rect x="728" y="1307" width="36" height="36" fill="rgba(40,120,135,0.19)"/><rect x="768" y="1307" width="36" height="36" fill="rgba(40,120,135,0.13)"/><rect x="808" y="1307" width="36" height="36" fill="rgba(40,120,135,0.19)"/><rect x="848" y="1307" width="36" height="36" fill="rgba(40,120,135,0.19)"/><rect x="888" y="1307" width="36" height="36" fill="rgba(40,120,135,0.26)"/><rect x="928" y="1307" width="36" height="36" fill="rgba(40,120,135,0.13)"/><rect x="968" y="1307" width="36" height="36" fill="rgba(40,120,135,0.19)"/><rect x="1008" y="1307" width="36" height="36" fill="rgba(40,120,135,0.08)"/><rect x="1048" y="1307" width="36" height="36" fill="rgba(40,120,135,0.08)"/><rect x="1088" y="1307" width="36" height="36" fill="rgba(40,120,135,0.19)"/><rect x="1128" y="1307" width="36" height="36" fill="rgba(40,120,135,0.08)"/><rect x="1208" y="1307" width="36" height="36" fill="rgba(40,120,135,0.03)"/><rect x="1288" y="1307" width="36" height="36" fill="rgba(40,120,135,0.03)"/><rect x="1328" y="1307" width="36" height="36" fill="rgba(40,120,135,0.03)"/><rect x="1408" y="1307" width="36" height="36" fill="rgba(40,120,135,0.045)"/><rect x="1528" y="1307" width="36" height="36" fill="rgba(40,120,135,0.045)"/><rect x="488" y="1347" width="36" height="36" fill="rgba(40,120,135,0.045)"/><rect x="528" y="1347" width="36" height="36" fill="rgba(40,120,135,0.19)"/><rect x="568" y="1347" width="36" height="36" fill="rgba(40,120,135,0.19)"/><rect x="608" y="1347" width="36" height="36" fill="rgba(40,120,135,0.19)"/><rect x="648" y="1347" width="36" height="36" fill="rgba(40,120,135,0.19)"/><rect x="688" y="1347" width="36" height="36" fill="rgba(40,120,135,0.33)"/><rect x="728" y="1347" width="36" height="36" fill="rgba(40,120,135,0.13)"/><rect x="768" y="1347" width="36" height="36" fill="rgba(40,120,135,0.08)"/><rect x="808" y="1347" width="36" height="36" fill="rgba(40,120,135,0.19)"/><rect x="848" y="1347" width="36" height="36" fill="rgba(40,120,135,0.19)"/><rect x="888" y="1347" width="36" height="36" fill="rgba(40,120,135,0.045)"/><rect x="928" y="1347" width="36" height="36" fill="rgba(40,120,135,0.045)"/><rect x="968" y="1347" width="36" height="36" fill="rgba(40,120,135,0.08)"/><rect x="1008" y="1347" width="36" height="36" fill="rgba(40,120,135,0.19)"/><rect x="1048" y="1347" width="36" height="36" fill="rgba(40,120,135,0.19)"/><rect x="1088" y="1347" width="36" height="36" fill="rgba(40,120,135,0.19)"/><rect x="1128" y="1347" width="36" height="36" fill="rgba(40,120,135,0.045)"/><rect x="1208" y="1347" width="36" height="36" fill="rgba(40,120,135,0.03)"/><rect x="1288" y="1347" width="36" height="36" fill="rgba(40,120,135,0.03)"/><rect x="1328" y="1347" width="36" height="36" fill="rgba(40,120,135,0.08)"/><rect x="1368" y="1347" width="36" height="36" fill="rgba(40,120,135,0.045)"/><rect x="1408" y="1347" width="36" height="36" fill="rgba(40,120,135,0.08)"/><rect x="1448" y="1347" width="36" height="36" fill="rgba(40,120,135,0.045)"/><rect x="1528" y="1347" width="36" height="36" fill="rgba(40,120,135,0.045)"/><rect x="368" y="1387" width="36" height="36" fill="rgba(40,120,135,0.08)"/><rect x="408" y="1387" width="36" height="36" fill="rgba(40,120,135,0.13)"/><rect x="448" y="1387" width="36" height="36" fill="rgba(40,120,135,0.08)"/><rect x="488" y="1387" width="36" height="36" fill="rgba(40,120,135,0.045)"/><rect x="528" y="1387" width="36" height="36" fill="rgba(40,120,135,0.19)"/><rect x="568" y="1387" width="36" height="36" fill="rgba(40,120,135,0.33)"/><rect x="608" y="1387" width="36" height="36" fill="rgba(40,120,135,0.26)"/><rect x="648" y="1387" width="36" height="36" fill="rgba(40,120,135,0.41)"/><rect x="688" y="1387" width="36" height="36" fill="rgba(40,120,135,0.26)"/><rect x="728" y="1387" width="36" height="36" fill="rgba(40,120,135,0.26)"/><rect x="768" y="1387" width="36" height="36" fill="rgba(40,120,135,0.26)"/><rect x="928" y="1387" width="36" height="36" fill="rgba(40,120,135,0.03)"/><rect x="1048" y="1387" width="36" height="36" fill="rgba(40,120,135,0.13)"/><rect x="1128" y="1387" width="36" height="36" fill="rgba(40,120,135,0.03)"/><rect x="1168" y="1387" width="36" height="36" fill="rgba(40,120,135,0.03)"/><rect x="1328" y="1387" width="36" height="36" fill="rgba(40,120,135,0.03)"/><rect x="1368" y="1387" width="36" height="36" fill="rgba(40,120,135,0.045)"/><rect x="1408" y="1387" width="36" height="36" fill="rgba(40,120,135,0.58)"/><rect x="1448" y="1387" width="36" height="36" fill="rgba(40,120,135,0.19)"/><rect x="248" y="1427" width="36" height="36" fill="rgba(40,120,135,0.045)"/><rect x="488" y="1427" width="36" height="36" fill="rgba(40,120,135,0.045)"/><rect x="528" y="1427" width="36" height="36" fill="rgba(40,120,135,0.19)"/><rect x="568" y="1427" width="36" height="36" fill="rgba(40,120,135,0.19)"/><rect x="608" y="1427" width="36" height="36" fill="rgba(40,120,135,0.19)"/><rect x="648" y="1427" width="36" height="36" fill="rgba(40,120,135,0.26)"/><rect x="688" y="1427" width="36" height="36" fill="rgba(40,120,135,0.19)"/><rect x="728" y="1427" width="36" height="36" fill="rgba(40,120,135,0.19)"/><rect x="768" y="1427" width="36" height="36" fill="rgba(40,120,135,0.19)"/><rect x="808" y="1427" width="36" height="36" fill="rgba(40,120,135,0.41)"/><rect x="848" y="1427" width="36" height="36" fill="rgba(40,120,135,0.19)"/><rect x="888" y="1427" width="36" height="36" fill="rgba(40,120,135,0.19)"/><rect x="928" y="1427" width="36" height="36" fill="rgba(40,120,135,0.045)"/><rect x="1208" y="1427" width="36" height="36" fill="rgba(40,120,135,0.03)"/><rect x="1328" y="1427" width="36" height="36" fill="rgba(40,120,135,0.13)"/><rect x="1368" y="1427" width="36" height="36" fill="rgba(40,120,135,0.26)"/><rect x="1408" y="1427" width="36" height="36" fill="rgba(40,120,135,0.05)"/><rect x="1528" y="1427" width="36" height="36" fill="rgba(40,120,135,0.045)"/><rect x="208" y="1467" width="36" height="36" fill="rgba(40,120,135,0.045)"/><rect x="288" y="1467" width="36" height="36" fill="rgba(40,120,135,0.045)"/><rect x="368" y="1467" width="36" height="36" fill="rgba(40,120,135,0.045)"/><rect x="408" y="1467" width="36" height="36" fill="rgba(40,120,135,0.045)"/><rect x="488" y="1467" width="36" height="36" fill="rgba(40,120,135,0.08)"/><rect x="528" y="1467" width="36" height="36" fill="rgba(40,120,135,0.33)"/><rect x="568" y="1467" width="36" height="36" fill="rgba(40,120,135,0.26)"/><rect x="608" y="1467" width="36" height="36" fill="rgba(40,120,135,0.33)"/><rect x="648" y="1467" width="36" height="36" fill="rgba(40,120,135,0.26)"/><rect x="688" y="1467" width="36" height="36" fill="rgba(40,120,135,0.26)"/><rect x="728" y="1467" width="36" height="36" fill="rgba(40,120,135,0.19)"/><rect x="768" y="1467" width="36" height="36" fill="rgba(40,120,135,0.26)"/><rect x="808" y="1467" width="36" height="36" fill="rgba(40,120,135,0.19)"/><rect x="848" y="1467" width="36" height="36" fill="rgba(40,120,135,0.19)"/><rect x="888" y="1467" width="36" height="36" fill="rgba(40,120,135,0.13)"/><rect x="928" y="1467" width="36" height="36" fill="rgba(40,120,135,0.045)"/><rect x="1008" y="1467" width="36" height="36" fill="rgba(40,120,135,0.08)"/><rect x="1128" y="1467" width="36" height="36" fill="rgba(40,120,135,0.045)"/><rect x="1168" y="1467" width="36" height="36" fill="rgba(40,120,135,0.03)"/><rect x="1248" y="1467" width="36" height="36" fill="rgba(40,120,135,0.03)"/><rect x="1328" y="1467" width="36" height="36" fill="rgba(40,120,135,0.03)"/><rect x="1368" y="1467" width="36" height="36" fill="rgba(40,120,135,0.03)"/><rect x="1448" y="1467" width="36" height="36" fill="rgba(40,120,135,0.08)"/><rect x="1568" y="1467" width="36" height="36" fill="rgba(40,120,135,0.13)"/><rect x="248" y="1507" width="36" height="36" fill="rgba(40,120,135,0.045)"/><rect x="368" y="1507" width="36" height="36" fill="rgba(40,120,135,0.045)"/><rect x="488" y="1507" width="36" height="36" fill="rgba(40,120,135,0.045)"/><rect x="528" y="1507" width="36" height="36" fill="rgba(40,120,135,0.41)"/><rect x="568" y="1507" width="36" height="36" fill="rgba(40,120,135,0.19)"/><rect x="608" y="1507" width="36" height="36" fill="rgba(40,120,135,0.26)"/><rect x="648" y="1507" width="36" height="36" fill="rgba(40,120,135,0.13)"/><rect x="688" y="1507" width="36" height="36" fill="rgba(40,120,135,0.19)"/><rect x="728" y="1507" width="36" height="36" fill="rgba(40,120,135,0.33)"/><rect x="768" y="1507" width="36" height="36" fill="rgba(40,120,135,0.19)"/><rect x="808" y="1507" width="36" height="36" fill="rgba(40,120,135,0.33)"/><rect x="848" y="1507" width="36" height="36" fill="rgba(40,120,135,0.41)"/><rect x="888" y="1507" width="36" height="36" fill="rgba(40,120,135,0.13)"/><rect x="928" y="1507" width="36" height="36" fill="rgba(40,120,135,0.03)"/><rect x="1008" y="1507" width="36" height="36" fill="rgba(40,120,135,0.26)"/><rect x="1048" y="1507" width="36" height="36" fill="rgba(40,120,135,0.045)"/><rect x="1368" y="1507" width="36" height="36" fill="rgba(40,120,135,0.13)"/><rect x="1408" y="1507" width="36" height="36" fill="rgba(40,120,135,0.13)"/><rect x="1448" y="1507" width="36" height="36" fill="rgba(40,120,135,0.08)"/><rect x="208" y="1547" width="36" height="36" fill="rgba(40,120,135,0.045)"/><rect x="288" y="1547" width="36" height="36" fill="rgba(40,120,135,0.08)"/><rect x="488" y="1547" width="36" height="36" fill="rgba(40,120,135,0.045)"/><rect x="528" y="1547" width="36" height="36" fill="rgba(40,120,135,0.13)"/><rect x="568" y="1547" width="36" height="36" fill="rgba(40,120,135,0.13)"/><rect x="608" y="1547" width="36" height="36" fill="rgba(40,120,135,0.045)"/><rect x="648" y="1547" width="36" height="36" fill="rgba(40,120,135,0.33)"/><rect x="688" y="1547" width="36" height="36" fill="rgba(40,120,135,0.19)"/><rect x="728" y="1547" width="36" height="36" fill="rgba(40,120,135,0.26)"/><rect x="768" y="1547" width="36" height="36" fill="rgba(40,120,135,0.26)"/><rect x="808" y="1547" width="36" height="36" fill="rgba(40,120,135,0.08)"/><rect x="848" y="1547" width="36" height="36" fill="rgba(40,120,135,0.045)"/><rect x="928" y="1547" width="36" height="36" fill="rgba(40,120,135,0.03)"/><rect x="1008" y="1547" width="36" height="36" fill="rgba(40,120,135,0.045)"/><rect x="1048" y="1547" width="36" height="36" fill="rgba(40,120,135,0.08)"/><rect x="1328" y="1547" width="36" height="36" fill="rgba(40,120,135,0.03)"/><rect x="1368" y="1547" width="36" height="36" fill="rgba(40,120,135,0.045)"/><rect x="1408" y="1547" width="36" height="36" fill="rgba(40,120,135,0.13)"/><rect x="1448" y="1547" width="36" height="36" fill="rgba(40,120,135,0.13)"/><rect x="1488" y="1547" width="36" height="36" fill="rgba(40,120,135,0.19)"/><rect x="328" y="1587" width="36" height="36" fill="rgba(40,120,135,0.08)"/><rect x="488" y="1587" width="36" height="36" fill="rgba(40,120,135,0.045)"/><rect x="528" y="1587" width="36" height="36" fill="rgba(40,120,135,0.08)"/><rect x="568" y="1587" width="36" height="36" fill="rgba(40,120,135,0.13)"/><rect x="608" y="1587" width="36" height="36" fill="rgba(40,120,135,0.045)"/><rect x="648" y="1587" width="36" height="36" fill="rgba(40,120,135,0.19)"/><rect x="688" y="1587" width="36" height="36" fill="rgba(40,120,135,0.19)"/><rect x="728" y="1587" width="36" height="36" fill="rgba(40,120,135,0.13)"/><rect x="768" y="1587" width="36" height="36" fill="rgba(40,120,135,0.13)"/><rect x="808" y="1587" width="36" height="36" fill="rgba(40,120,135,0.19)"/><rect x="848" y="1587" width="36" height="36" fill="rgba(40,120,135,0.19)"/><rect x="888" y="1587" width="36" height="36" fill="rgba(40,120,135,0.045)"/><rect x="928" y="1587" width="36" height="36" fill="rgba(40,120,135,0.045)"/><rect x="968" y="1587" width="36" height="36" fill="rgba(40,120,135,0.045)"/><rect x="1048" y="1587" width="36" height="36" fill="rgba(40,120,135,0.03)"/><rect x="1168" y="1587" width="36" height="36" fill="rgba(40,120,135,0.03)"/><rect x="1208" y="1587" width="36" height="36" fill="rgba(40,120,135,0.03)"/><rect x="1328" y="1587" width="36" height="36" fill="rgba(40,120,135,0.03)"/><rect x="1448" y="1587" width="36" height="36" fill="rgba(40,120,135,0.045)"/><rect x="1488" y="1587" width="36" height="36" fill="rgba(40,120,135,0.045)"/><rect x="1528" y="1587" width="36" height="36" fill="rgba(40,120,135,0.045)"/><rect x="448" y="1627" width="36" height="36" fill="rgba(40,120,135,0.05)"/><rect x="528" y="1627" width="36" height="36" fill="rgba(40,120,135,0.05)"/><rect x="808" y="1627" width="36" height="36" fill="rgba(40,120,135,0.19)"/><rect x="848" y="1627" width="36" height="36" fill="rgba(40,120,135,0.19)"/><rect x="888" y="1627" width="36" height="36" fill="rgba(40,120,135,0.19)"/><rect x="968" y="1627" width="36" height="36" fill="rgba(40,120,135,0.05)"/><rect x="1048" y="1627" width="36" height="36" fill="rgba(40,120,135,0.05)"/><rect x="1208" y="1627" width="36" height="36" fill="rgba(40,120,135,0.19)"/><rect x="1368" y="1627" width="36" height="36" fill="rgba(40,120,135,0.19)"/><rect x="1568" y="1627" width="36" height="36" fill="rgba(40,120,135,0.05)"/><rect x="448" y="1667" width="36" height="36" fill="rgba(40,120,135,0.05)"/><rect x="488" y="1667" width="36" height="36" fill="rgba(40,120,135,0.05)"/><rect x="528" y="1667" width="36" height="36" fill="rgba(40,120,135,0.05)"/><rect x="768" y="1667" width="36" height="36" fill="rgba(40,120,135,0.05)"/><rect x="928" y="1667" width="36" height="36" fill="rgba(40,120,135,0.13)"/><rect x="1048" y="1667" width="36" height="36" fill="rgba(40,120,135,0.13)"/><rect x="1288" y="1667" width="36" height="36" fill="rgba(40,120,135,0.19)"/><rect x="1568" y="1667" width="36" height="36" fill="rgba(40,120,135,0.05)"/><rect x="648" y="1707" width="36" height="36" fill="rgba(40,120,135,0.05)"/><rect x="688" y="1707" width="36" height="36" fill="rgba(40,120,135,0.05)"/><rect x="728" y="1707" width="36" height="36" fill="rgba(40,120,135,0.05)"/><rect x="768" y="1707" width="36" height="36" fill="rgba(40,120,135,0.05)"/><rect x="808" y="1707" width="36" height="36" fill="rgba(40,120,135,0.05)"/><rect x="888" y="1707" width="36" height="36" fill="rgba(40,120,135,0.05)"/><rect x="1008" y="1707" width="36" height="36" fill="rgba(40,120,135,0.05)"/><rect x="1048" y="1707" width="36" height="36" fill="rgba(40,120,135,0.05)"/><rect x="1168" y="1707" width="36" height="36" fill="rgba(40,120,135,0.05)"/><rect x="1208" y="1707" width="36" height="36" fill="rgba(40,120,135,0.05)"/><rect x="1528" y="1707" width="36" height="36" fill="rgba(40,120,135,0.19)"/></g></svg><div class="t" style="left:95.00px;top:1100.99px;font-size:26px;line-height:26px;font-weight:normal;color:#888;letter-spacing:0.500px;font-family:'Liberation Sans',sans-serif;text-shadow:0 0 3px #fff,0 0 3px #fff">es</div><div class="t" style="left:437.00px;top:1147.97px;font-size:35px;line-height:35px;font-weight:bold;color:#5f6366;letter-spacing:-0.717px;font-family:'Liberation Sans',sans-serif;opacity:0.85">Avignon</div><div class="t" style="left:735.60px;top:1115.84px;font-size:25px;line-height:25px;font-weight:normal;color:#8c8c8c;letter-spacing:2.104px;font-family:'Liberation Sans',sans-serif;text-shadow:0 0 3px #fff,0 0 3px #fff">QUARTIER</div><div class="t" style="left:766.70px;top:1146.44px;font-size:25px;line-height:25px;font-weight:normal;color:#8c8c8c;letter-spacing:1.915px;font-family:'Liberation Sans',sans-serif;text-shadow:0 0 3px #fff,0 0 3px #fff">NORD</div><div class="t" style="left:832.00px;top:1240.84px;font-size:25px;line-height:25px;font-weight:normal;color:#8c8c8c;letter-spacing:1.762px;font-family:'Liberation Sans',sans-serif;text-shadow:0 0 3px #fff,0 0 3px #fff">QUARTIER</div><div class="t" style="left:874.00px;top:1271.84px;font-size:25px;line-height:25px;font-weight:normal;color:#8c8c8c;letter-spacing:2.825px;font-family:'Liberation Sans',sans-serif;text-shadow:0 0 3px #fff,0 0 3px #fff">EST</div><div class="t" style="left:1120.00px;top:1270.84px;font-size:25px;line-height:25px;font-weight:normal;color:#8c8c8c;letter-spacing:1.990px;font-family:'Liberation Sans',sans-serif;text-shadow:0 0 3px #fff,0 0 3px #fff">QUARTIER</div><div class="t" style="left:1104.60px;top:1300.84px;font-size:25px;line-height:25px;font-weight:normal;color:#8c8c8c;letter-spacing:2.593px;font-family:'Liberation Sans',sans-serif;text-shadow:0 0 3px #fff,0 0 3px #fff">MONTFAVET</div><div class="t" style="left:545.00px;top:1318.84px;font-size:25px;line-height:25px;font-weight:normal;color:#8c8c8c;letter-spacing:2.290px;font-family:'Liberation Sans',sans-serif;text-shadow:0 0 3px #fff,0 0 3px #fff">QUARTIER</div><div class="t" style="left:576.00px;top:1349.84px;font-size:25px;line-height:25px;font-weight:normal;color:#8c8c8c;letter-spacing:2.682px;font-family:'Liberation Sans',sans-serif;text-shadow:0 0 3px #fff,0 0 3px #fff">NORD</div><div class="t" style="left:558.00px;top:1379.84px;font-size:25px;line-height:25px;font-weight:normal;color:#8c8c8c;letter-spacing:1.883px;font-family:'Liberation Sans',sans-serif;text-shadow:0 0 3px #fff,0 0 3px #fff">ROCADE</div><div class="t" style="left:285.60px;top:1418.84px;font-size:25px;line-height:25px;font-weight:normal;color:#8c8c8c;letter-spacing:2.104px;font-family:'Liberation Sans',sans-serif;text-shadow:0 0 3px #fff,0 0 3px #fff">QUARTIER</div><div class="t" style="left:310.60px;top:1450.84px;font-size:25px;line-height:25px;font-weight:normal;color:#8c8c8c;letter-spacing:1.638px;font-family:'Liberation Sans',sans-serif;text-shadow:0 0 3px #fff,0 0 3px #fff">OUEST</div><div class="t" style="left:1353.00px;top:1621.84px;font-size:25px;line-height:25px;font-weight:normal;color:#8c8c8c;letter-spacing:2.047px;font-family:'Liberation Sans',sans-serif;text-shadow:0 0 3px #fff,0 0 3px #fff">QUARTIER</div><div class="t" style="left:1545.00px;top:1265.14px;font-size:27px;line-height:27px;font-weight:normal;color:#888;letter-spacing:0.500px;font-family:'Liberation Sans',sans-serif;text-shadow:0 0 3px #fff,0 0 3px #fff">Mo</div><div class="t" style="left:1548.00px;top:1297.14px;font-size:27px;line-height:27px;font-weight:normal;color:#888;letter-spacing:0.500px;font-family:'Liberation Sans',sans-serif;text-shadow:0 0 3px #fff,0 0 3px #fff">lès-</div><div class="a" style="left:1576.00px;top:1071.00px;width:32.00px;height:605.00px;background:#fff"></div><div class="a" style="left:1028.00px;top:1636.00px;width:548.00px;height:40.00px;background:rgba(255,255,255,0.55)"></div><div class="t" style="left:1038.80px;top:1645.26px;font-size:24.5px;line-height:24.5px;font-weight:normal;color:#333;letter-spacing:0.051px;font-family:'Liberation Sans',sans-serif;">© Mapbox © OpenStreetMap</div><div class="t" style="left:1366.80px;top:1645.26px;font-size:24.5px;line-height:24.5px;font-weight:bold;color:#333;letter-spacing:-0.246px;font-family:'Liberation Sans',sans-serif;">Improve this map</div><svg class="a" style="left:106.00px;top:1618.00px;" width="50.00" height="48.00" viewBox="0 0 50 48"><circle cx="24.8" cy="24" r="21.5" fill="#fff" stroke="#fff" stroke-width="3"/><circle cx="24.8" cy="24" r="19.6" fill="#fff" stroke="#8e8e8e" stroke-width="2.4"/><path d="M14.3 33.5 L14.5 25 A10.5 10.5 0 1 1 24 32.8 Z" fill="#8e8e8e"/><path d="M24.5 20 L26 24 L30 25.3 L26 26.6 L24.5 30.6 L23 26.6 L19 25.3 L23 24Z" fill="#fff"/></svg><div class="t" style="left:155.50px;top:1620.18px;font-size:37px;line-height:37px;font-weight:bold;color:#fff;letter-spacing:-4.056px;font-family:'Liberation Sans',sans-serif;text-shadow:2px 0px 0 #8e8e8e,-2px 0px 0 #8e8e8e,0px 2px 0 #8e8e8e,0px -2px 0 #8e8e8e,1.4px 1.4px 0 #8e8e8e,-1.4px 1.4px 0 #8e8e8e,1.4px -1.4px 0 #8e8e8e,-1.4px -1.4px 0 #8e8e8e">mapbox</div><svg class="a" style="left:1673px;top:1071px;" width="1480" height="605" viewBox="1785 1147 1480 605"><defs><clipPath id="m2"><rect x="1785" y="1147" width="1480" height="605"/></clipPath><radialGradient id="cg"><stop offset="0" stop-color="#2b6f7d" stop-opacity="0.9"/><stop offset="0.35" stop-color="#2f7381" stop-opacity="0.7"/><stop offset="0.7" stop-color="#3a7c8a" stop-opacity="0.3"/><stop offset="1" stop-color="#3a7c8a" stop-opacity="0"/></radialGradient><radialGradient id="hz"><stop offset="0" stop-color="#3a7c8a" stop-opacity="0.35"/><stop offset="0.75" stop-color="#3a7c8a" stop-opacity="0.25"/><stop offset="1" stop-color="#3a7c8a" stop-opacity="0"/></radialGradient></defs><g clip-path="url(#m2)"><rect x="1785" y="1147" width="1480" height="605" fill="#f4f4f3"/><polyline points="2422,1147 2412,1250 2400,1330 2392,1360" fill="none" stroke="#d3d9dc" stroke-width="11" stroke-linejoin="round" stroke-linecap="round" /><polyline points="2541,1147 2534,1200 2512,1229 2392,1204 2367,1236 2370,1325 2388,1360 2374,1396 2320,1417 2285,1442" fill="none" stroke="#d3d9dc" stroke-width="6" stroke-linejoin="round" stroke-linecap="round" /><polyline points="2545,1147 2576,1200 2583,1254 2576,1325 2555,1374 2516,1392 2452,1396 2409,1417 2338,1431 2285,1442" fill="none" stroke="#d3d9dc" stroke-width="11" stroke-linejoin="round" stroke-linecap="round" /><polygon points="2300,1420 2250,1480 2200,1530 2150,1548 2080,1562 2040,1590 2010,1640 1960,1715 1935,1752 1895,1752 1925,1700 1975,1630 2010,1585 2050,1550 2110,1535 2170,1522 2225,1470 2275,1412" fill="#d3d9dc"/><polyline points="2285,1440 2240,1490 2190,1540 2120,1555 2060,1575 2025,1620 2000,1665 1960,1720 1925,1752" fill="none" stroke="#b9bec1" stroke-width="2.5" stroke-linejoin="round" stroke-linecap="round" stroke-dasharray="10 7"/><polyline points="2392,1204 2367,1236 2370,1325 2388,1360 2374,1396 2320,1417 2285,1442" fill="none" stroke="#b9bec1" stroke-width="2.5" stroke-linejoin="round" stroke-linecap="round" stroke-dasharray="10 7"/><polygon points="2000,1655 2100,1668 2200,1680 2300,1690 2380,1702 2450,1705 2540,1706 2620,1722 2680,1752 2640,1752 2560,1718 2450,1716 2380,1713 2300,1700 2200,1692 2100,1680 2000,1667" fill="#d3d9dc"/><polyline points="2743,1147 2800,1360 2854,1477 2872,1752" fill="none" stroke="#e3e8ea" stroke-width="6.199999999999999" stroke-linejoin="round" stroke-linecap="round" /><polyline points="2598,1310 2676,1282 2747,1232 2782,1211 2872,1172 2996,1147" fill="none" stroke="#e3e8ea" stroke-width="5.5" stroke-linejoin="round" stroke-linecap="round" /><polyline points="2765,1314 2815,1296 2864,1310 2935,1360 2967,1403 2996,1467 3042,1619" fill="none" stroke="#e3e8ea" stroke-width="4.8" stroke-linejoin="round" stroke-linecap="round" /><polyline points="2943,1421 3042,1381 3113,1360 3195,1342 3265,1303" fill="none" stroke="#e3e8ea" stroke-width="4.8" stroke-linejoin="round" stroke-linecap="round" /><polyline points="3067,1147 3106,1222 3156,1275 3195,1342 3223,1467 3262,1555" fill="none" stroke="#e3e8ea" stroke-width="4.8" stroke-linejoin="round" stroke-linecap="round" /><polyline points="3042,1619 3149,1641 3220,1623 3265,1612" fill="none" stroke="#e3e8ea" stroke-width="4.8" stroke-linejoin="round" stroke-linecap="round" /><polyline points="2765,1520 2843,1540 2914,1584 2996,1623 3042,1619" fill="none" stroke="#e3e8ea" stroke-width="4.8" stroke-linejoin="round" stroke-linecap="round" /><polyline points="3113,1360 3149,1424 3152,1520 3198,1548 3237,1559 3265,1587" fill="none" stroke="#e3e8ea" stroke-width="4.8" stroke-linejoin="round" stroke-linecap="round" /><polyline points="3035,1619 3035,1752" fill="none" stroke="#e3e8ea" stroke-width="4.8" stroke-linejoin="round" stroke-linecap="round" /><polyline points="2505,1431 2598,1438 2729,1445 2885,1438 3000,1440 3265,1450" fill="none" stroke="#e3e8ea" stroke-width="5.5" stroke-linejoin="round" stroke-linecap="round" /><polyline points="2498,1417 2605,1389 2743,1346 2885,1289" fill="none" stroke="#e3e8ea" stroke-width="4.8" stroke-linejoin="round" stroke-linecap="round" /><polyline points="2598,1310 2605,1460" fill="none" stroke="#e3e8ea" stroke-width="4.8" stroke-linejoin="round" stroke-linecap="round" /><polyline points="2598,1310 2640,1147" fill="none" stroke="#e3e8ea" stroke-width="4.8" stroke-linejoin="round" stroke-linecap="round" /><polyline points="2598,1460 2711,1474 2885,1460" fill="none" stroke="#e3e8ea" stroke-width="4.8" stroke-linejoin="round" stroke-linecap="round" /><polyline points="2470,1566 2605,1630 2729,1701 2782,1752" fill="none" stroke="#e3e8ea" stroke-width="6.199999999999999" stroke-linejoin="round" stroke-linecap="round" /><polyline points="2598,1460 2640,1538 2693,1627 2711,1752" fill="none" stroke="#e3e8ea" stroke-width="4.8" stroke-linejoin="round" stroke-linecap="round" /><polyline points="1785,1481 1884,1460 1963,1403 2062,1408 2098,1417 2122,1456 2204,1477 2257,1467" fill="none" stroke="#e3e8ea" stroke-width="5.5" stroke-linejoin="round" stroke-linecap="round" /><polyline points="2034,1147 2066,1211 2069,1282 2041,1346 2062,1403" fill="none" stroke="#e3e8ea" stroke-width="4.8" stroke-linejoin="round" stroke-linecap="round" /><polyline points="1785,1154 1913,1183 1927,1211 1938,1254 2034,1282 2094,1282 2201,1218 2229,1168 2222,1147" fill="none" stroke="#e3e8ea" stroke-width="4.8" stroke-linejoin="round" stroke-linecap="round" /><polyline points="1785,1289 1821,1303 1849,1353 1956,1396" fill="none" stroke="#e3e8ea" stroke-width="4.8" stroke-linejoin="round" stroke-linecap="round" /><polyline points="1888,1460 1881,1573 1888,1619 1867,1680 1860,1752" fill="none" stroke="#e3e8ea" stroke-width="4.8" stroke-linejoin="round" stroke-linecap="round" /><polyline points="2140,1147 2098,1218" fill="none" stroke="#e3e8ea" stroke-width="4.8" stroke-linejoin="round" stroke-linecap="round" /><polyline points="1785,1289 1806,1264 1838,1243 1913,1183" fill="none" stroke="#e3e8ea" stroke-width="4.8" stroke-linejoin="round" stroke-linecap="round" /><polyline points="2201,1502 2229,1556 2247,1619 2282,1708" fill="none" stroke="#e3e8ea" stroke-width="4.8" stroke-linejoin="round" stroke-linecap="round" /><polyline points="2400,1452 2420,1560 2410,1752" fill="none" stroke="#e3e8ea" stroke-width="4.8" stroke-linejoin="round" stroke-linecap="round" /><polyline points="2300,1560 2340,1620 2330,1752" fill="none" stroke="#e3e8ea" stroke-width="4.5" stroke-linejoin="round" stroke-linecap="round" /><polyline points="2860,1560 2950,1600 3000,1680 3030,1752" fill="none" stroke="#e3e8ea" stroke-width="4.5" stroke-linejoin="round" stroke-linecap="round" /><polyline points="2650,1200 2700,1260" fill="none" stroke="#e3e8ea" stroke-width="4.5" stroke-linejoin="round" stroke-linecap="round" /><polyline points="2743,1147 2800,1360 2854,1477 2872,1752" fill="none" stroke="#fff" stroke-width="4.199999999999999" stroke-linejoin="round" stroke-linecap="round" /><polyline points="2598,1310 2676,1282 2747,1232 2782,1211 2872,1172 2996,1147" fill="none" stroke="#fff" stroke-width="3.5" stroke-linejoin="round" stroke-linecap="round" /><polyline points="2765,1314 2815,1296 2864,1310 2935,1360 2967,1403 2996,1467 3042,1619" fill="none" stroke="#fff" stroke-width="2.8" stroke-linejoin="round" stroke-linecap="round" /><polyline points="2943,1421 3042,1381 3113,1360 3195,1342 3265,1303" fill="none" stroke="#fff" stroke-width="2.8" stroke-linejoin="round" stroke-linecap="round" /><polyline points="3067,1147 3106,1222 3156,1275 3195,1342 3223,1467 3262,1555" fill="none" stroke="#fff" stroke-width="2.8" stroke-linejoin="round" stroke-linecap="round" /><polyline points="3042,1619 3149,1641 3220,1623 3265,1612" fill="none" stroke="#fff" stroke-width="2.8" stroke-linejoin="round" stroke-linecap="round" /><polyline points="2765,1520 2843,1540 2914,1584 2996,1623 3042,1619" fill="none" stroke="#fff" stroke-width="2.8" stroke-linejoin="round" stroke-linecap="round" /><polyline points="3113,1360 3149,1424 3152,1520 3198,1548 3237,1559 3265,1587" fill="none" stroke="#fff" stroke-width="2.8" stroke-linejoin="round" stroke-linecap="round" /><polyline points="3035,1619 3035,1752" fill="none" stroke="#fff" stroke-width="2.8" stroke-linejoin="round" stroke-linecap="round" /><polyline points="2505,1431 2598,1438 2729,1445 2885,1438 3000,1440 3265,1450" fill="none" stroke="#fff" stroke-width="3.5" stroke-linejoin="round" stroke-linecap="round" /><polyline points="2498,1417 2605,1389 2743,1346 2885,1289" fill="none" stroke="#fff" stroke-width="2.8" stroke-linejoin="round" stroke-linecap="round" /><polyline points="2598,1310 2605,1460" fill="none" stroke="#fff" stroke-width="2.8" stroke-linejoin="round" stroke-linecap="round" /><polyline points="2598,1310 2640,1147" fill="none" stroke="#fff" stroke-width="2.8" stroke-linejoin="round" stroke-linecap="round" /><polyline points="2598,1460 2711,1474 2885,1460" fill="none" stroke="#fff" stroke-width="2.8" stroke-linejoin="round" stroke-linecap="round" /><polyline points="2470,1566 2605,1630 2729,1701 2782,1752" fill="none" stroke="#fff" stroke-width="4.199999999999999" stroke-linejoin="round" stroke-linecap="round" /><polyline points="2598,1460 2640,1538 2693,1627 2711,1752" fill="none" stroke="#fff" stroke-width="2.8" stroke-linejoin="round" stroke-linecap="round" /><polyline points="1785,1481 1884,1460 1963,1403 2062,1408 2098,1417 2122,1456 2204,1477 2257,1467" fill="none" stroke="#fff" stroke-width="3.5" stroke-linejoin="round" stroke-linecap="round" /><polyline points="2034,1147 2066,1211 2069,1282 2041,1346 2062,1403" fill="none" stroke="#fff" stroke-width="2.8" stroke-linejoin="round" stroke-linecap="round" /><polyline points="1785,1154 1913,1183 1927,1211 1938,1254 2034,1282 2094,1282 2201,1218 2229,1168 2222,1147" fill="none" stroke="#fff" stroke-width="2.8" stroke-linejoin="round" stroke-linecap="round" /><polyline points="1785,1289 1821,1303 1849,1353 1956,1396" fill="none" stroke="#fff" stroke-width="2.8" stroke-linejoin="round" stroke-linecap="round" /><polyline points="1888,1460 1881,1573 1888,1619 1867,1680 1860,1752" fill="none" stroke="#fff" stroke-width="2.8" stroke-linejoin="round" stroke-linecap="round" /><polyline points="2140,1147 2098,1218" fill="none" stroke="#fff" stroke-width="2.8" stroke-linejoin="round" stroke-linecap="round" /><polyline points="1785,1289 1806,1264 1838,1243 1913,1183" fill="none" stroke="#fff" stroke-width="2.8" stroke-linejoin="round" stroke-linecap="round" /><polyline points="2201,1502 2229,1556 2247,1619 2282,1708" fill="none" stroke="#fff" stroke-width="2.8" stroke-linejoin="round" stroke-linecap="round" /><polyline points="2400,1452 2420,1560 2410,1752" fill="none" stroke="#fff" stroke-width="2.8" stroke-linejoin="round" stroke-linecap="round" /><polyline points="2300,1560 2340,1620 2330,1752" fill="none" stroke="#fff" stroke-width="2.5" stroke-linejoin="round" stroke-linecap="round" /><polyline points="2860,1560 2950,1600 3000,1680 3030,1752" fill="none" stroke="#fff" stroke-width="2.5" stroke-linejoin="round" stroke-linecap="round" /><polyline points="2650,1200 2700,1260" fill="none" stroke="#fff" stroke-width="2.5" stroke-linejoin="round" stroke-linecap="round" /><polyline points="2296,1558 2343,1622 2418,1613 2474,1572 2512,1517 2512,1459 2456,1438 2362,1442 2309,1481 2296,1558" fill="none" stroke="#fff" stroke-width="4.5" stroke-linejoin="round" stroke-linecap="round" /><polyline points="2309,1481 2400,1520 2512,1517" fill="none" stroke="#fff" stroke-width="2.5" stroke-linejoin="round" stroke-linecap="round" /><polyline points="2362,1442 2380,1520 2370,1622" fill="none" stroke="#fff" stroke-width="2.5" stroke-linejoin="round" stroke-linecap="round" /><polyline points="2456,1438 2420,1520 2418,1613" fill="none" stroke="#fff" stroke-width="2.5" stroke-linejoin="round" stroke-linecap="round" /><polyline points="2296,1558 2400,1540 2474,1572" fill="none" stroke="#fff" stroke-width="2.5" stroke-linejoin="round" stroke-linecap="round" /><polyline points="2343,1622 2390,1560 2456,1438" fill="none" stroke="#fff" stroke-width="2.5" stroke-linejoin="round" stroke-linecap="round" /><polyline points="2512,1517 2600,1535 2680,1525" fill="none" stroke="#fff" stroke-width="2.5" stroke-linejoin="round" stroke-linecap="round" /><polyline points="2418,1613 2500,1640 2600,1650" fill="none" stroke="#fff" stroke-width="2.5" stroke-linejoin="round" stroke-linecap="round" /><circle cx="2395" cy="1530" r="175" fill="url(#hz)"/><circle cx="2388" cy="1495" r="100" fill="url(#cg)"/><circle cx="2327" cy="1590" r="58" fill="url(#cg)"/><circle cx="2430" cy="1598" r="70" fill="url(#cg)"/><circle cx="2540" cy="1515.7" r="60" fill="url(#cg)"/><circle cx="2684.6" cy="1588.6" r="50" fill="url(#cg)"/><circle cx="2472.6" cy="1337.8" r="28" fill="url(#cg)"/><circle cx="2545.4" cy="1272" r="15" fill="url(#cg)"/><circle cx="2688" cy="1484.5" r="17" fill="url(#cg)"/><circle cx="2572" cy="1657" r="21" fill="url(#cg)"/><circle cx="2756.8" cy="1719" r="23" fill="url(#cg)"/><circle cx="2205" cy="1592" r="24" fill="url(#cg)"/><circle cx="2408.6" cy="1225.2" r="20" fill="#2e7683"/></g></svg><div class="t" style="left:1961.50px;top:1071.28px;font-size:24px;line-height:24px;font-weight:normal;color:#777;letter-spacing:-0.947px;font-family:'Liberation Sans',sans-serif;text-shadow:0 0 3px #fff,0 0 3px #fff">LFNT</div><div class="t" style="left:2121.00px;top:1271.20px;font-size:30px;line-height:30px;font-weight:normal;color:#8c8c8c;letter-spacing:-0.189px;font-family:'Liberation Sans',sans-serif;text-shadow:0 0 3px #fff,0 0 3px #fff">Villeneuve-</div><div class="t" style="left:2117.00px;top:1302.61px;font-size:30px;line-height:30px;font-weight:normal;color:#8c8c8c;letter-spacing:0.147px;font-family:'Liberation Sans',sans-serif;text-shadow:0 0 3px #fff,0 0 3px #fff">lès-Avignon</div><div class="t" style="left:2437.40px;top:1292.45px;font-size:29px;line-height:29px;font-weight:normal;color:#8c8c8c;letter-spacing:-0.187px;font-family:'Liberation Sans',sans-serif;text-shadow:0 0 3px #fff,0 0 3px #fff">Le Pontet</div><div class="t" style="left:2176.60px;top:1377.91px;font-size:32px;line-height:32px;font-weight:normal;color:#4f5d62;letter-spacing:1.189px;font-family:'Liberation Sans',sans-serif;opacity:0.85">Avignon</div><div class="t" style="left:2227.44px;top:1390.67px;font-size:58px;line-height:58px;font-weight:normal;color:#fff;letter-spacing:0.300px;font-family:'Liberation Sans',sans-serif;">675</div><div class="t" style="left:2403.63px;top:1426.02px;font-size:28px;line-height:28px;font-weight:normal;color:#fff;letter-spacing:0.300px;font-family:'Liberation Sans',sans-serif;">141</div><div class="t" style="left:2191.68px;top:1500.81px;font-size:27px;line-height:27px;font-weight:normal;color:#fff;letter-spacing:0.300px;font-family:'Liberation Sans',sans-serif;">136</div><div class="t" style="left:2292.52px;top:1507.35px;font-size:30px;line-height:30px;font-weight:normal;color:#fff;letter-spacing:0.300px;font-family:'Liberation Sans',sans-serif;">206</div><div class="t" style="left:2551.40px;top:1500.39px;font-size:25px;line-height:25px;font-weight:normal;color:#fff;letter-spacing:0.300px;font-family:'Liberation Sans',sans-serif;">100</div><div class="t" style="left:2352.28px;top:1254.47px;font-size:15px;line-height:15px;font-weight:normal;color:#fff;letter-spacing:0.300px;font-family:'Liberation Sans',sans-serif;">37</div><div class="t" style="left:2428.25px;top:1191.60px;font-size:9px;line-height:9px;font-weight:normal;color:#fff;letter-spacing:0.300px;font-family:'Liberation Sans',sans-serif;">10</div><div class="t" style="left:2570.07px;top:1403.62px;font-size:10px;line-height:10px;font-weight:normal;color:#fff;letter-spacing:0.300px;font-family:'Liberation Sans',sans-serif;">15</div><div class="t" style="left:2453.01px;top:1575.14px;font-size:12px;line-height:12px;font-weight:normal;color:#fff;letter-spacing:0.300px;font-family:'Liberation Sans',sans-serif;">23</div><div class="t" style="left:2637.81px;top:1637.14px;font-size:12px;line-height:12px;font-weight:normal;color:#fff;letter-spacing:0.300px;font-family:'Liberation Sans',sans-serif;">31</div><div class="t" style="left:2086.01px;top:1510.14px;font-size:12px;line-height:12px;font-weight:normal;color:#fff;letter-spacing:0.300px;font-family:'Liberation Sans',sans-serif;">31</div><div class="a" style="left:2605.00px;top:1636.00px;width:548.00px;height:40.00px;background:rgba(255,255,255,0.55)"></div><div class="t" style="left:2615.80px;top:1645.26px;font-size:24.5px;line-height:24.5px;font-weight:normal;color:#333;letter-spacing:0.051px;font-family:'Liberation Sans',sans-serif;">© Mapbox © OpenStreetMap</div><div class="t" style="left:2943.80px;top:1645.26px;font-size:24.5px;line-height:24.5px;font-weight:bold;color:#333;letter-spacing:-0.246px;font-family:'Liberation Sans',sans-serif;">Improve this map</div><svg class="a" style="left:1683.00px;top:1618.00px;" width="50.00" height="48.00" viewBox="0 0 50 48"><circle cx="24.8" cy="24" r="21.5" fill="#fff" stroke="#fff" stroke-width="3"/><circle cx="24.8" cy="24" r="19.6" fill="#fff" stroke="#8e8e8e" stroke-width="2.4"/><path d="M14.3 33.5 L14.5 25 A10.5 10.5 0 1 1 24 32.8 Z" fill="#8e8e8e"/><path d="M24.5 20 L26 24 L30 25.3 L26 26.6 L24.5 30.6 L23 26.6 L19 25.3 L23 24Z" fill="#fff"/></svg><div class="t" style="left:1732.50px;top:1620.18px;font-size:37px;line-height:37px;font-weight:bold;color:#fff;letter-spacing:-4.056px;font-family:'Liberation Sans',sans-serif;text-shadow:2px 0px 0 #8e8e8e,-2px 0px 0 #8e8e8e,0px 2px 0 #8e8e8e,0px -2px 0 #8e8e8e,1.4px 1.4px 0 #8e8e8e,-1.4px 1.4px 0 #8e8e8e,1.4px -1.4px 0 #8e8e8e,-1.4px -1.4px 0 #8e8e8e">mapbox</div><div class="t" style="left:94.00px;top:1772.22px;font-size:34px;line-height:34px;font-weight:normal;color:#333;letter-spacing:0.127px;font-family:'Liberation Sans',sans-serif;-webkit-text-stroke:0.4px #333">Monthly Total Energy Usage by Type</div><div class="a" style="left:3062.00px;top:1764.00px;width:44.00px;height:44.00px;background:#b4b4b4;border-radius:50%"></div><svg class="a" style="left:3070.00px;top:1776.00px;" width="28.00" height="22.00" viewBox="0 0 28 22"><path d="M4 4.5 H24 M8.5 11 H19.5 M12 17.5 H16" stroke="#fff" stroke-width="2.6" stroke-linecap="round"/></svg><svg class="a" style="left:3133.00px;top:1766.00px;" width="10.00" height="40.00" viewBox="0 0 10 40"><circle cx="5" cy="8" r="4" fill="#8a959c"/><circle cx="5" cy="20" r="4" fill="#8a959c"/><circle cx="5" cy="32" r="4" fill="#8a959c"/></svg><svg class="a" style="left:2477.80px;top:1832.00px;" width="50.00" height="31.00" viewBox="0 0 50.0 31"><path d="M0 15.5 H50" stroke="#45a5c9" stroke-width="3.4"/><circle cx="25" cy="15.5" r="10.5" fill="#fff" stroke="#45a5c9" stroke-width="3.4"/></svg><div class="t" style="left:2537.50px;top:1835.68px;font-size:24px;line-height:24px;font-weight:normal;color:#333;letter-spacing:0.032px;font-family:'Liberation Sans',sans-serif;">Climate Control</div><svg class="a" style="left:2725.00px;top:1832.00px;" width="50.00" height="31.00" viewBox="0 0 50 31"><path d="M0 15.5 H50" stroke="#454c7b" stroke-width="3.4"/><circle cx="25" cy="15.5" r="10.5" fill="#fff" stroke="#454c7b" stroke-width="3.4"/></svg><div class="t" style="left:2785.00px;top:1835.68px;font-size:24px;line-height:24px;font-weight:normal;color:#333;letter-spacing:0.049px;font-family:'Liberation Sans',sans-serif;">Kitchen</div><svg class="a" style="left:2888.00px;top:1832.00px;" width="50.00" height="31.00" viewBox="0 0 50 31"><path d="M0 15.5 H50" stroke="#6dbd86" stroke-width="3.4"/><circle cx="25" cy="15.5" r="10.5" fill="#fff" stroke="#6dbd86" stroke-width="3.4"/></svg><div class="t" style="left:2947.50px;top:1835.68px;font-size:24px;line-height:24px;font-weight:normal;color:#333;letter-spacing:-0.205px;font-family:'Liberation Sans',sans-serif;">Laundry</div><svg class="a" style="left:3048.00px;top:1836.00px;" width="36.00" height="36.00" viewBox="0 0 36 36"><path d="M9 4 V13 M4.5 8.5 H13.5 M9 13 V31.5 H31.5 V13 H13.5" fill="none" stroke="#555" stroke-width="2.2"/></svg><svg class="a" style="left:3100.00px;top:1836.00px;" width="34.00" height="36.00" viewBox="0 0 34 36"><path d="M5 13 V31.5 H29.5 V13 H11.5 M11.5 6 L5 12 L11.5 18" fill="none" stroke="#555" stroke-width="2.2"/></svg><div class="t" style="left:275.00px;top:2313.28px;font-size:24px;line-height:24px;font-weight:normal;color:#6e7079;letter-spacing:0.300px;font-family:'Liberation Sans',sans-serif;">0</div><div class="t" style="left:234.06px;top:2249.71px;font-size:24px;line-height:24px;font-weight:normal;color:#6e7079;letter-spacing:0.300px;font-family:'Liberation Sans',sans-serif;">100k</div><div class="t" style="left:234.06px;top:2186.14px;font-size:24px;line-height:24px;font-weight:normal;color:#6e7079;letter-spacing:0.300px;font-family:'Liberation Sans',sans-serif;">200k</div><div class="t" style="left:234.06px;top:2122.57px;font-size:24px;line-height:24px;font-weight:normal;color:#6e7079;letter-spacing:0.300px;font-family:'Liberation Sans',sans-serif;">300k</div><div class="t" style="left:234.06px;top:2059.00px;font-size:24px;line-height:24px;font-weight:normal;color:#6e7079;letter-spacing:0.300px;font-family:'Liberation Sans',sans-serif;">400k</div><div class="t" style="left:234.06px;top:1995.43px;font-size:24px;line-height:24px;font-weight:normal;color:#6e7079;letter-spacing:0.300px;font-family:'Liberation Sans',sans-serif;">500k</div><div class="t" style="left:234.06px;top:1931.86px;font-size:24px;line-height:24px;font-weight:normal;color:#6e7079;letter-spacing:0.300px;font-family:'Liberation Sans',sans-serif;">600k</div><svg class="a" style="left:268px;top:1914px;" width="2850" height="593" viewBox="380 1990 2850 593"><path d="M416 2337.43 H3186" stroke="#e0e6f1" stroke-width="2"/><path d="M416 2273.86 H3186" stroke="#e0e6f1" stroke-width="2"/><path d="M416 2210.29 H3186" stroke="#e0e6f1" stroke-width="2"/><path d="M416 2146.72 H3186" stroke="#e0e6f1" stroke-width="2"/><path d="M416 2083.15 H3186" stroke="#e0e6f1" stroke-width="2"/><path d="M416 2019.58 H3186" stroke="#e0e6f1" stroke-width="2"/><path d="M410 2388.29 H416" stroke="#6e7079" stroke-width="2"/><path d="M410 2375.57 H416" stroke="#6e7079" stroke-width="2"/><path d="M410 2362.86 H416" stroke="#6e7079" stroke-width="2"/><path d="M410 2350.14 H416" stroke="#6e7079" stroke-width="2"/><path d="M410 2324.72 H416" stroke="#6e7079" stroke-width="2"/><path d="M410 2312.00 H416" stroke="#6e7079" stroke-width="2"/><path d="M410 2299.29 H416" stroke="#6e7079" stroke-width="2"/><path d="M410 2286.57 H416" stroke="#6e7079" stroke-width="2"/><path d="M410 2261.15 H416" stroke="#6e7079" stroke-width="2"/><path d="M410 2248.43 H416" stroke="#6e7079" stroke-width="2"/><path d="M410 2235.72 H416" stroke="#6e7079" stroke-width="2"/><path d="M410 2223.00 H416" stroke="#6e7079" stroke-width="2"/><path d="M410 2197.58 H416" stroke="#6e7079" stroke-width="2"/><path d="M410 2184.86 H416" stroke="#6e7079" stroke-width="2"/><path d="M410 2172.15 H416" stroke="#6e7079" stroke-width="2"/><path d="M410 2159.43 H416" stroke="#6e7079" stroke-width="2"/><path d="M410 2134.01 H416" stroke="#6e7079" stroke-width="2"/><path d="M410 2121.29 H416" stroke="#6e7079" stroke-width="2"/><path d="M410 2108.58 H416" stroke="#6e7079" stroke-width="2"/><path d="M410 2095.86 H416" stroke="#6e7079" stroke-width="2"/><path d="M410 2070.44 H416" stroke="#6e7079" stroke-width="2"/><path d="M410 2057.72 H416" stroke="#6e7079" stroke-width="2"/><path d="M410 2045.01 H416" stroke="#6e7079" stroke-width="2"/><path d="M410 2032.29 H416" stroke="#6e7079" stroke-width="2"/><polygon points="416,2401 416.94,2295.50 477.00,2191.70 537.06,2228.50 591.31,2216.00 651.37,2280.00 709.49,2254.80 769.55,2281.00 827.67,2302.00 887.73,2257.00 947.79,2256.40 1005.91,2237.80 1065.97,2210.00 1124.09,2170.80 1184.15,2201.00 1244.21,2237.80 1300.39,2223.40 1360.45,2212.50 1418.58,2216.00 1478.64,2216.00 1536.76,2255.40 1596.82,2349.40 1656.88,2219.60 1715.00,2224.40 1775.06,2221.80 1833.18,2205.00 1893.24,2191.30 1953.30,2211.50 2007.55,2191.70 2067.61,2204.50 2125.73,2202.60 2185.79,2235.60 2243.91,2280.40 2303.97,2278.00 2364.03,2211.50 2422.15,2192.30 2482.21,2186.90 2540.33,2156.40 2600.39,2148.00 2660.45,2138.80 2714.70,2194.00 2774.76,2187.00 2832.88,2169.00 2892.94,2205.60 2951.06,2278.00 3011.12,2298.30 3071.18,2236.30 3129.30,2200.30 3189.36,2242.50 3186,2401" fill="#44a6c8" fill-opacity="0.5"/><polygon points="416.94,2278.00 477.00,2156.00 537.06,2198.00 591.31,2178.00 651.37,2253.00 709.49,2206.70 769.55,2242.00 827.67,2274.70 887.73,2234.00 947.79,2222.00 1005.91,2210.60 1065.97,2176.50 1124.09,2123.40 1184.15,2162.50 1244.21,2211.50 1300.39,2182.70 1360.45,2182.70 1418.58,2182.00 1478.64,2172.40 1536.76,2226.60 1596.82,2345.50 1656.88,2186.90 1715.00,2196.70 1775.06,2185.00 1833.18,2176.00 1893.24,2143.60 1953.30,2182.00 2007.55,2150.00 2067.61,2170.50 2125.73,2175.00 2185.79,2215.70 2243.91,2268.60 2303.97,2256.40 2364.03,2179.00 2422.15,2157.00 2482.21,2148.40 2540.33,2119.60 2600.39,2113.80 2660.45,2107.40 2714.70,2172.00 2774.76,2163.00 2832.88,2138.50 2892.94,2164.00 2951.06,2266.20 3011.12,2290.60 3071.18,2212.60 3129.30,2169.70 3189.36,2213.40 3189.36,2242.50 3129.30,2200.30 3071.18,2236.30 3011.12,2298.30 2951.06,2278.00 2892.94,2205.60 2832.88,2169.00 2774.76,2187.00 2714.70,2194.00 2660.45,2138.80 2600.39,2148.00 2540.33,2156.40 2482.21,2186.90 2422.15,2192.30 2364.03,2211.50 2303.97,2278.00 2243.91,2280.40 2185.79,2235.60 2125.73,2202.60 2067.61,2204.50 2007.55,2191.70 1953.30,2211.50 1893.24,2191.30 1833.18,2205.00 1775.06,2221.80 1715.00,2224.40 1656.88,2219.60 1596.82,2349.40 1536.76,2255.40 1478.64,2216.00 1418.58,2216.00 1360.45,2212.50 1300.39,2223.40 1244.21,2237.80 1184.15,2201.00 1124.09,2170.80 1065.97,2210.00 1005.91,2237.80 947.79,2256.40 887.73,2257.00 827.67,2302.00 769.55,2281.00 709.49,2254.80 651.37,2280.00 591.31,2216.00 537.06,2228.50 477.00,2191.70 416.94,2295.50" fill="#454c7b" fill-opacity="0.5"/><polygon points="416.94,2247.80 477.00,2105.00 537.06,2157.00 591.31,2111.00 651.37,2228.50 709.49,2161.00 769.55,2198.70 827.67,2238.80 887.73,2202.60 947.79,2174.70 1005.91,2153.80 1065.97,2130.60 1124.09,2070.50 1184.15,2123.40 1244.21,2175.60 1300.39,2132.00 1360.45,2137.00 1418.58,2144.00 1478.64,2132.00 1536.76,2197.80 1596.82,2330.00 1656.88,2158.00 1715.00,2157.00 1775.06,2149.70 1833.18,2151.00 1893.24,2097.80 1953.30,2149.00 2007.55,2120.00 2067.61,2136.90 2125.73,2143.00 2185.79,2197.00 2243.91,2242.00 2303.97,2232.40 2364.03,2149.70 2422.15,2122.80 2482.21,2114.40 2540.33,2085.60 2600.39,2077.60 2660.45,2073.70 2714.70,2133.70 2774.76,2138.90 2832.88,2105.00 2892.94,2133.00 2951.06,2245.00 3011.12,2273.00 3071.18,2191.90 3129.30,2131.20 3189.36,2186.20 3189.36,2213.40 3129.30,2169.70 3071.18,2212.60 3011.12,2290.60 2951.06,2266.20 2892.94,2164.00 2832.88,2138.50 2774.76,2163.00 2714.70,2172.00 2660.45,2107.40 2600.39,2113.80 2540.33,2119.60 2482.21,2148.40 2422.15,2157.00 2364.03,2179.00 2303.97,2256.40 2243.91,2268.60 2185.79,2215.70 2125.73,2175.00 2067.61,2170.50 2007.55,2150.00 1953.30,2182.00 1893.24,2143.60 1833.18,2176.00 1775.06,2185.00 1715.00,2196.70 1656.88,2186.90 1596.82,2345.50 1536.76,2226.60 1478.64,2172.40 1418.58,2182.00 1360.45,2182.70 1300.39,2182.70 1244.21,2211.50 1184.15,2162.50 1124.09,2123.40 1065.97,2176.50 1005.91,2210.60 947.79,2222.00 887.73,2234.00 827.67,2274.70 769.55,2242.00 709.49,2206.70 651.37,2253.00 591.31,2178.00 537.06,2198.00 477.00,2156.00 416.94,2278.00" fill="#6cbd85" fill-opacity="0.5"/><polyline points="416.94,2295.50 477.00,2191.70 537.06,2228.50 591.31,2216.00 651.37,2280.00 709.49,2254.80 769.55,2281.00 827.67,2302.00 887.73,2257.00 947.79,2256.40 1005.91,2237.80 1065.97,2210.00 1124.09,2170.80 1184.15,2201.00 1244.21,2237.80 1300.39,2223.40 1360.45,2212.50 1418.58,2216.00 1478.64,2216.00 1536.76,2255.40 1596.82,2349.40 1656.88,2219.60 1715.00,2224.40 1775.06,2221.80 1833.18,2205.00 1893.24,2191.30 1953.30,2211.50 2007.55,2191.70 2067.61,2204.50 2125.73,2202.60 2185.79,2235.60 2243.91,2280.40 2303.97,2278.00 2364.03,2211.50 2422.15,2192.30 2482.21,2186.90 2540.33,2156.40 2600.39,2148.00 2660.45,2138.80 2714.70,2194.00 2774.76,2187.00 2832.88,2169.00 2892.94,2205.60 2951.06,2278.00 3011.12,2298.30 3071.18,2236.30 3129.30,2200.30 3189.36,2242.50" fill="none" stroke="#45a5c9" stroke-width="4" stroke-linejoin="round"/><polyline points="416.94,2278.00 477.00,2156.00 537.06,2198.00 591.31,2178.00 651.37,2253.00 709.49,2206.70 769.55,2242.00 827.67,2274.70 887.73,2234.00 947.79,2222.00 1005.91,2210.60 1065.97,2176.50 1124.09,2123.40 1184.15,2162.50 1244.21,2211.50 1300.39,2182.70 1360.45,2182.70 1418.58,2182.00 1478.64,2172.40 1536.76,2226.60 1596.82,2345.50 1656.88,2186.90 1715.00,2196.70 1775.06,2185.00 1833.18,2176.00 1893.24,2143.60 1953.30,2182.00 2007.55,2150.00 2067.61,2170.50 2125.73,2175.00 2185.79,2215.70 2243.91,2268.60 2303.97,2256.40 2364.03,2179.00 2422.15,2157.00 2482.21,2148.40 2540.33,2119.60 2600.39,2113.80 2660.45,2107.40 2714.70,2172.00 2774.76,2163.00 2832.88,2138.50 2892.94,2164.00 2951.06,2266.20 3011.12,2290.60 3071.18,2212.60 3129.30,2169.70 3189.36,2213.40" fill="none" stroke="#454c7b" stroke-width="4" stroke-linejoin="round"/><polyline points="416.94,2247.80 477.00,2105.00 537.06,2157.00 591.31,2111.00 651.37,2228.50 709.49,2161.00 769.55,2198.70 827.67,2238.80 887.73,2202.60 947.79,2174.70 1005.91,2153.80 1065.97,2130.60 1124.09,2070.50 1184.15,2123.40 1244.21,2175.60 1300.39,2132.00 1360.45,2137.00 1418.58,2144.00 1478.64,2132.00 1536.76,2197.80 1596.82,2330.00 1656.88,2158.00 1715.00,2157.00 1775.06,2149.70 1833.18,2151.00 1893.24,2097.80 1953.30,2149.00 2007.55,2120.00 2067.61,2136.90 2125.73,2143.00 2185.79,2197.00 2243.91,2242.00 2303.97,2232.40 2364.03,2149.70 2422.15,2122.80 2482.21,2114.40 2540.33,2085.60 2600.39,2077.60 2660.45,2073.70 2714.70,2133.70 2774.76,2138.90 2832.88,2105.00 2892.94,2133.00 2951.06,2245.00 3011.12,2273.00 3071.18,2191.90 3129.30,2131.20 3189.36,2186.20" fill="none" stroke="#6dbd86" stroke-width="4" stroke-linejoin="round"/><path d="M416 2401 H3186" stroke="#6e7079" stroke-width="2.2"/><path d="M477.00 2401 V2410" stroke="#6e7079" stroke-width="2"/><path d="M827.67 2401 V2410" stroke="#6e7079" stroke-width="2"/><path d="M1184.15 2401 V2410" stroke="#6e7079" stroke-width="2"/><path d="M1536.76 2401 V2410" stroke="#6e7079" stroke-width="2"/><path d="M1893.24 2401 V2410" stroke="#6e7079" stroke-width="2"/><path d="M2243.91 2401 V2410" stroke="#6e7079" stroke-width="2"/><path d="M2600.39 2401 V2410" stroke="#6e7079" stroke-width="2"/><path d="M2951.06 2401 V2410" stroke="#6e7079" stroke-width="2"/><path d="M423 2494 V2483 Q423 2481 425 2481 H3189 Q3191 2481 3191 2483 V2494 Z" fill="#dfe5f3"/><rect x="423" y="2494" width="2768" height="59" fill="#e8eefc"/><polygon points="423,2553 423.94,2532.81 483.96,2514.23 543.97,2520.82 598.18,2518.58 658.20,2530.04 716.28,2525.53 776.29,2530.22 834.37,2533.98 894.39,2525.92 954.40,2525.81 1012.48,2522.48 1072.50,2517.51 1130.58,2510.49 1190.60,2515.90 1250.61,2522.48 1306.76,2519.91 1366.77,2517.96 1424.85,2518.58 1484.87,2518.58 1542.95,2525.64 1602.96,2542.46 1662.98,2519.23 1721.06,2520.09 1781.08,2519.62 1839.16,2516.61 1899.17,2514.16 1959.19,2517.78 2013.40,2514.23 2073.41,2516.52 2131.49,2516.18 2191.51,2522.09 2249.59,2530.11 2309.61,2529.68 2369.62,2517.78 2427.70,2514.34 2487.72,2513.37 2545.80,2507.91 2605.81,2506.41 2665.83,2504.76 2720.04,2514.64 2780.05,2513.39 2838.13,2510.17 2898.15,2516.72 2956.23,2529.68 3016.25,2533.32 3076.26,2522.22 3134.34,2515.77 3194.36,2523.33 3191,2553" fill="#8fb0f7" fill-opacity="0.22"/><polyline points="423.94,2532.81 483.96,2514.23 543.97,2520.82 598.18,2518.58 658.20,2530.04 716.28,2525.53 776.29,2530.22 834.37,2533.98 894.39,2525.92 954.40,2525.81 1012.48,2522.48 1072.50,2517.51 1130.58,2510.49 1190.60,2515.90 1250.61,2522.48 1306.76,2519.91 1366.77,2517.96 1424.85,2518.58 1484.87,2518.58 1542.95,2525.64 1602.96,2542.46 1662.98,2519.23 1721.06,2520.09 1781.08,2519.62 1839.16,2516.61 1899.17,2514.16 1959.19,2517.78 2013.40,2514.23 2073.41,2516.52 2131.49,2516.18 2191.51,2522.09 2249.59,2530.11 2309.61,2529.68 2369.62,2517.78 2427.70,2514.34 2487.72,2513.37 2545.80,2507.91 2605.81,2506.41 2665.83,2504.76 2720.04,2514.64 2780.05,2513.39 2838.13,2510.17 2898.15,2516.72 2956.23,2529.68 3016.25,2533.32 3076.26,2522.22 3134.34,2515.77 3194.36,2523.33" fill="none" stroke="#8fb0f7" stroke-width="1.2"/><path d="M423 2494 H3191" stroke="#d2dbee" stroke-width="2"/><path d="M423 2553 H3191" stroke="#d2dbee" stroke-width="2"/><path d="M423.5 2494 V2553 M3190.5 2494 V2553" stroke="#acb8d1" stroke-width="2"/><rect x="418" y="2505" width="12.5" height="37.5" rx="3.5" fill="#fff" stroke="#acb8d1" stroke-width="2"/><rect x="3183.5" y="2505" width="12.5" height="37.5" rx="3.5" fill="#fff" stroke="#acb8d1" stroke-width="2"/><path d="M1803 2484 V2490 M1806 2484 V2490 M1809 2484 V2490" stroke="#fff" stroke-width="1.4"/></svg><div class="t" style="left:338.03px;top:2340.68px;font-size:24px;line-height:24px;font-weight:bold;color:#6e7079;letter-spacing:0.300px;font-family:'Liberation Sans',sans-serif;">2007</div><div class="t" style="left:700.70px;top:2340.68px;font-size:24px;line-height:24px;font-weight:normal;color:#6e7079;letter-spacing:0.300px;font-family:'Liberation Sans',sans-serif;">Jul</div><div class="t" style="left:1045.18px;top:2340.68px;font-size:24px;line-height:24px;font-weight:bold;color:#6e7079;letter-spacing:0.300px;font-family:'Liberation Sans',sans-serif;">2008</div><div class="t" style="left:1409.78px;top:2340.68px;font-size:24px;line-height:24px;font-weight:normal;color:#6e7079;letter-spacing:0.300px;font-family:'Liberation Sans',sans-serif;">Jul</div><div class="t" style="left:1754.27px;top:2340.68px;font-size:24px;line-height:24px;font-weight:bold;color:#6e7079;letter-spacing:0.300px;font-family:'Liberation Sans',sans-serif;">2009</div><div class="t" style="left:2116.93px;top:2340.68px;font-size:24px;line-height:24px;font-weight:normal;color:#6e7079;letter-spacing:0.300px;font-family:'Liberation Sans',sans-serif;">Jul</div><div class="t" style="left:2461.42px;top:2340.68px;font-size:24px;line-height:24px;font-weight:bold;color:#6e7079;letter-spacing:0.300px;font-family:'Liberation Sans',sans-serif;">2010</div><div class="t" style="left:2824.09px;top:2340.68px;font-size:24px;line-height:24px;font-weight:normal;color:#6e7079;letter-spacing:0.300px;font-family:'Liberation Sans',sans-serif;">Jul</div><div class="t" style="left:77.62px;top:2119.18px;font-size:24px;line-height:24px;font-weight:normal;color:#6e7079;letter-spacing:0.000px;font-family:'Liberation Sans',sans-serif;transform:rotate(-90deg);transform-origin:50% 60%">Kilowatts (per Month)</div></div></body></html>
